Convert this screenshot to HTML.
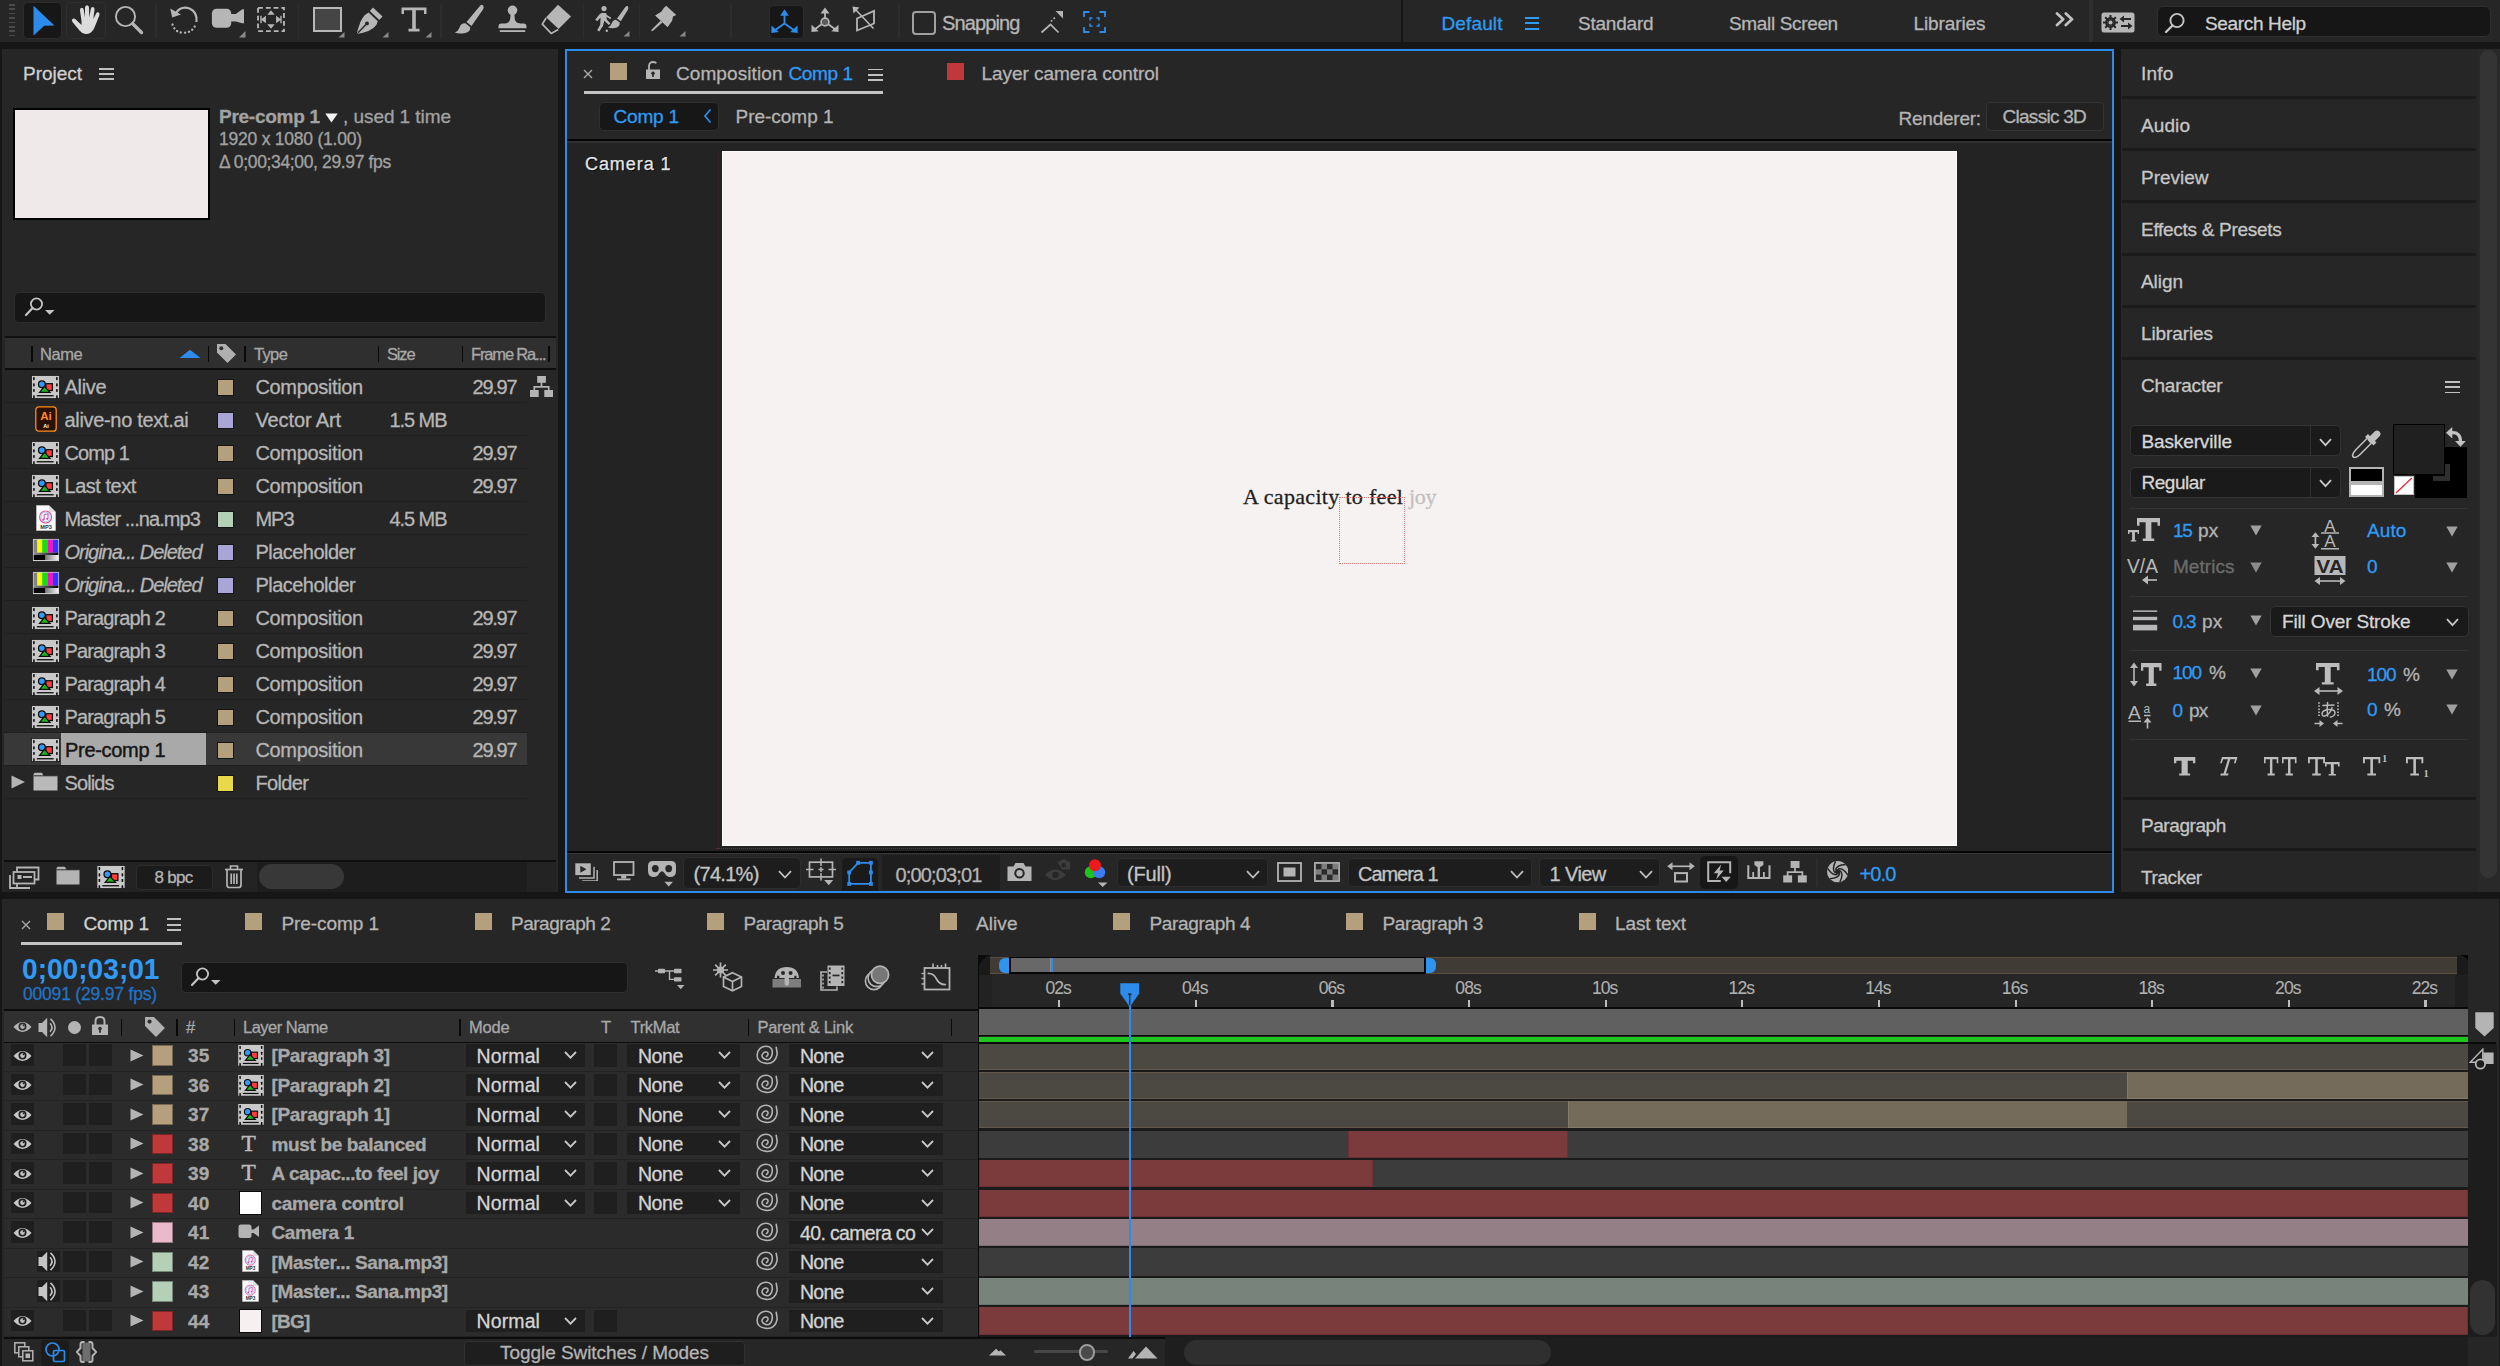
<!DOCTYPE html>
<html><head><meta charset="utf-8"><title>After Effects</title>
<style>
html,body{margin:0;padding:0;background:#161616;}
body{width:2500px;height:1366px;position:relative;overflow:hidden;font-family:"Liberation Sans",sans-serif;}
#r div,#r svg,#r span{position:absolute;box-sizing:border-box;}
#r{position:absolute;left:0;top:0;width:2500px;height:1366px;overflow:hidden;}
.t{white-space:nowrap;display:block;-webkit-text-stroke:0.3px;}
</style></head><body><div id="r">
<div style="left:0px;top:0px;width:2500px;height:42px;background:#262626;"></div>
<div style="left:2px;top:49px;width:556px;height:843px;background:#262626;"></div>
<div style="left:565px;top:49px;width:1549px;height:844px;background:#262626;border:2px solid #2d8ceb;"></div>
<div style="left:2121px;top:49px;width:357px;height:843px;background:#262626;"></div>
<div style="left:2478.4px;top:49px;width:21.6px;height:843px;background:#292929;"></div>
<div style="left:2px;top:899px;width:2496.5px;height:467px;background:#262626;"></div>
<span class="t" id="t0" style="left:23px;top:60.5px;font-size:19px;line-height:25px;color:#cfcfcf;letter-spacing:-0.022px;">Project</span>
<div style="left:99px;top:68.2px;width:14.5px;height:1.9px;background:#c0c0c0;"></div>
<div style="left:99px;top:73.3px;width:14.5px;height:1.9px;background:#c0c0c0;"></div>
<div style="left:99px;top:78.4px;width:14.5px;height:1.9px;background:#c0c0c0;"></div>
<div style="left:13px;top:108.3px;width:197px;height:112px;background:#efe9e9;border:2px solid #000;"></div>
<span class="t" id="t1" style="left:219px;top:103.5px;font-size:19px;line-height:25px;color:#a2a2a2;font-weight:700;letter-spacing:-0.262px;">Pre-comp 1</span>
<svg style="left:325px;top:112.6px;" width="13" height="10" viewBox="0 0 13 10"><path d="M0.3 0.5 L12.7 0.5 L6.5 9.5Z" fill="#f4f4f4"/></svg>
<span class="t" id="t2" style="left:343px;top:103.5px;font-size:19px;line-height:25px;color:#a2a2a2;letter-spacing:-0.062px;">, used 1 time</span>
<span class="t" id="t3" style="left:219px;top:128.3px;font-size:17.5px;line-height:23px;color:#a2a2a2;letter-spacing:-0.224px;">1920 x 1080 (1.00)</span>
<span class="t" id="t4" style="left:219px;top:151.3px;font-size:17.5px;line-height:23px;color:#a2a2a2;letter-spacing:-0.357px;">Δ 0;00;34;00, 29.97 fps</span>
<div style="left:14px;top:292px;width:532px;height:31px;background:#161616;border-radius:5px;border:1px solid #2e2e2e;"></div>
<svg style="left:24px;top:296px;" width="32" height="22" viewBox="0 0 32 22"><circle cx="12.5" cy="8" r="5.6" fill="none" stroke="#c4c4c4" stroke-width="1.8"/><path d="M8.6 12 L2 19" stroke="#c4c4c4" stroke-width="2.2" stroke-linecap="round"/><path d="M21 14 L30.5 14 L25.7 18.8Z" fill="#c4c4c4"/></svg>
<div style="left:5px;top:336px;width:551px;height:2px;background:#111;"></div>
<div style="left:5px;top:338px;width:551px;height:30px;background:#2f2f2f;"></div>
<div style="left:5px;top:368px;width:551px;height:2px;background:#0c0c0c;"></div>
<div style="left:31px;top:345.5px;width:1.5px;height:16.5px;background:#0a0a0a;"></div>
<div style="left:207.5px;top:345.5px;width:1.5px;height:16.5px;background:#0a0a0a;"></div>
<div style="left:244px;top:345.5px;width:1.5px;height:16.5px;background:#0a0a0a;"></div>
<div style="left:377.5px;top:345.5px;width:1.5px;height:16.5px;background:#0a0a0a;"></div>
<div style="left:461.5px;top:345.5px;width:1.5px;height:16.5px;background:#0a0a0a;"></div>
<div style="left:548px;top:345.5px;width:1.5px;height:16.5px;background:#0a0a0a;"></div>
<span class="t" id="t5" style="left:40px;top:343.5px;font-size:16.5px;line-height:21px;color:#a8a8a8;letter-spacing:-0.433px;">Name</span>
<span class="t" id="t6" style="left:254px;top:343.5px;font-size:16.5px;line-height:21px;color:#a8a8a8;letter-spacing:-0.652px;">Type</span>
<span class="t" id="t7" style="left:387px;top:343.5px;font-size:16.5px;line-height:21px;color:#a8a8a8;letter-spacing:-1.174px;">Size</span>
<span class="t" id="t8" style="left:471px;top:343.5px;font-size:16.5px;line-height:21px;color:#a8a8a8;letter-spacing:-1.153px;">Frame Ra...</span>
<svg style="left:179px;top:349px;" width="22" height="10" viewBox="0 0 22 10"><path d="M0.5 9 L11 0.8 L21.5 9Z" fill="#2d8ceb"/></svg>
<svg style="left:216px;top:343px;" width="22" height="22" viewBox="0 0 22 22"><path d="M1 1 L9.5 1 L20 11.5 L11.5 20 L1 9.5Z" fill="#b0b0b0"/><circle cx="5.3" cy="5.3" r="2" fill="#2f2f2f"/></svg>
<div style="left:4px;top:402px;width:522.5px;height:1px;background:#1f1f1f;"></div>
<svg style="left:31.2px;top:374.5px;" width="29" height="24" viewBox="0 0 29 24"><rect x="0.4" y="0.4" width="28.2" height="23.2" fill="#c9c9c9" stroke="#161616" stroke-width="0.8"/>
<g fill="#0e0e0e"><rect x="2.1" y="2.1" width="1.6" height="3.1" rx="0.6"/><rect x="2.1" y="8.3" width="1.6" height="3.1" rx="0.6"/><rect x="2.1" y="14" width="1.6" height="2.9" rx="0.6"/><rect x="2.1" y="20.2" width="1.6" height="3.4" rx="0.6"/>
<rect x="25.1" y="2.1" width="1.6" height="3.1" rx="0.6"/><rect x="25.1" y="8.3" width="1.6" height="3.1" rx="0.6"/><rect x="25.1" y="14" width="1.6" height="2.9" rx="0.6"/><rect x="25.1" y="20.2" width="1.6" height="3.4" rx="0.6"/>
<rect x="5.8" y="20.1" width="16.8" height="1.3"/></g>
<rect x="14.9" y="8.7" width="6.5" height="6.8" fill="#ff3b3b" stroke="#0c0c0c" stroke-width="1.25"/>
<circle cx="10.9" cy="9.3" r="3.4" fill="#3398fb" stroke="#0c0c0c" stroke-width="1.25"/>
<path d="M8.6 17.4 L13.5 11.4 L19 17.4Z" fill="#1db51d" stroke="#0c0c0c" stroke-width="1.25"/></svg>
<span class="t" id="t9" style="left:64.5px;top:374.0px;font-size:20px;line-height:26px;color:#b6b6b6;letter-spacing:-0.302px;">Alive</span>
<div style="left:216.5px;top:378.5px;width:17.5px;height:17.5px;background:#b5a07d;border:1px solid #151515;"></div>
<span class="t" id="t10" style="left:255.5px;top:374.0px;font-size:20px;line-height:26px;color:#b6b6b6;letter-spacing:-0.350px;">Composition</span>
<span class="t" id="t11" style="left:472.5px;top:374.0px;font-size:20px;line-height:26px;color:#b6b6b6;letter-spacing:-1.236px;">29.97</span>
<div style="left:4px;top:435px;width:522.5px;height:1px;background:#1f1f1f;"></div>
<svg style="left:35px;top:406px;" width="22" height="26" viewBox="0 0 22 26"><rect x="0.8" y="0.8" width="20.4" height="24.4" rx="3" fill="#2a1203" stroke="#ff8a1a" stroke-width="1.3"/>
<text x="11" y="13.5" font-family="Liberation Sans" font-weight="700" font-size="11.5" fill="#ff8a1a" text-anchor="middle">Ai</text>
<text x="11" y="22" font-family="Liberation Sans" font-weight="700" font-size="5.5" fill="#fff" text-anchor="middle">Ai</text></svg>
<span class="t" id="t12" style="left:64.5px;top:407.0px;font-size:20px;line-height:26px;color:#b6b6b6;letter-spacing:-0.321px;">alive-no text.ai</span>
<div style="left:216.5px;top:411.5px;width:17.5px;height:17.5px;background:#a9a5d6;border:1px solid #151515;"></div>
<span class="t" id="t13" style="left:255.5px;top:407.0px;font-size:20px;line-height:26px;color:#b6b6b6;letter-spacing:-0.128px;">Vector Art</span>
<span class="t" id="t14" style="left:389.5px;top:407.0px;font-size:20px;line-height:26px;color:#b6b6b6;letter-spacing:-1.065px;">1.5 MB</span>
<div style="left:4px;top:468px;width:522.5px;height:1px;background:#1f1f1f;"></div>
<svg style="left:31.2px;top:440.5px;" width="29" height="24" viewBox="0 0 29 24"><rect x="0.4" y="0.4" width="28.2" height="23.2" fill="#c9c9c9" stroke="#161616" stroke-width="0.8"/>
<g fill="#0e0e0e"><rect x="2.1" y="2.1" width="1.6" height="3.1" rx="0.6"/><rect x="2.1" y="8.3" width="1.6" height="3.1" rx="0.6"/><rect x="2.1" y="14" width="1.6" height="2.9" rx="0.6"/><rect x="2.1" y="20.2" width="1.6" height="3.4" rx="0.6"/>
<rect x="25.1" y="2.1" width="1.6" height="3.1" rx="0.6"/><rect x="25.1" y="8.3" width="1.6" height="3.1" rx="0.6"/><rect x="25.1" y="14" width="1.6" height="2.9" rx="0.6"/><rect x="25.1" y="20.2" width="1.6" height="3.4" rx="0.6"/>
<rect x="5.8" y="20.1" width="16.8" height="1.3"/></g>
<rect x="14.9" y="8.7" width="6.5" height="6.8" fill="#ff3b3b" stroke="#0c0c0c" stroke-width="1.25"/>
<circle cx="10.9" cy="9.3" r="3.4" fill="#3398fb" stroke="#0c0c0c" stroke-width="1.25"/>
<path d="M8.6 17.4 L13.5 11.4 L19 17.4Z" fill="#1db51d" stroke="#0c0c0c" stroke-width="1.25"/></svg>
<span class="t" id="t15" style="left:64.5px;top:440.0px;font-size:20px;line-height:26px;color:#b6b6b6;letter-spacing:-0.915px;">Comp 1</span>
<div style="left:216.5px;top:444.5px;width:17.5px;height:17.5px;background:#b5a07d;border:1px solid #151515;"></div>
<span class="t" id="t16" style="left:255.5px;top:440.0px;font-size:20px;line-height:26px;color:#b6b6b6;letter-spacing:-0.350px;">Composition</span>
<span class="t" id="t17" style="left:472.5px;top:440.0px;font-size:20px;line-height:26px;color:#b6b6b6;letter-spacing:-1.236px;">29.97</span>
<div style="left:4px;top:501px;width:522.5px;height:1px;background:#1f1f1f;"></div>
<svg style="left:31.2px;top:473.5px;" width="29" height="24" viewBox="0 0 29 24"><rect x="0.4" y="0.4" width="28.2" height="23.2" fill="#c9c9c9" stroke="#161616" stroke-width="0.8"/>
<g fill="#0e0e0e"><rect x="2.1" y="2.1" width="1.6" height="3.1" rx="0.6"/><rect x="2.1" y="8.3" width="1.6" height="3.1" rx="0.6"/><rect x="2.1" y="14" width="1.6" height="2.9" rx="0.6"/><rect x="2.1" y="20.2" width="1.6" height="3.4" rx="0.6"/>
<rect x="25.1" y="2.1" width="1.6" height="3.1" rx="0.6"/><rect x="25.1" y="8.3" width="1.6" height="3.1" rx="0.6"/><rect x="25.1" y="14" width="1.6" height="2.9" rx="0.6"/><rect x="25.1" y="20.2" width="1.6" height="3.4" rx="0.6"/>
<rect x="5.8" y="20.1" width="16.8" height="1.3"/></g>
<rect x="14.9" y="8.7" width="6.5" height="6.8" fill="#ff3b3b" stroke="#0c0c0c" stroke-width="1.25"/>
<circle cx="10.9" cy="9.3" r="3.4" fill="#3398fb" stroke="#0c0c0c" stroke-width="1.25"/>
<path d="M8.6 17.4 L13.5 11.4 L19 17.4Z" fill="#1db51d" stroke="#0c0c0c" stroke-width="1.25"/></svg>
<span class="t" id="t18" style="left:64.5px;top:473.0px;font-size:20px;line-height:26px;color:#b6b6b6;letter-spacing:-0.483px;">Last text</span>
<div style="left:216.5px;top:477.5px;width:17.5px;height:17.5px;background:#b5a07d;border:1px solid #151515;"></div>
<span class="t" id="t19" style="left:255.5px;top:473.0px;font-size:20px;line-height:26px;color:#b6b6b6;letter-spacing:-0.350px;">Composition</span>
<span class="t" id="t20" style="left:472.5px;top:473.0px;font-size:20px;line-height:26px;color:#b6b6b6;letter-spacing:-1.236px;">29.97</span>
<div style="left:4px;top:534px;width:522.5px;height:1px;background:#1f1f1f;"></div>
<svg style="left:36px;top:505px;" width="20" height="26" viewBox="0 0 20 26"><path d="M0.5 0.5 L13 0.5 L19.5 7 L19.5 25.5 L0.5 25.5Z" fill="#fbfbfb" stroke="#cfcfcf" stroke-width="0.6"/>
<path d="M13 0.5 L13 7 L19.5 7Z" fill="#dcdcdc"/>
<circle cx="9.6" cy="12" r="6" fill="#fff" stroke="#e0569b" stroke-width="1.1"/>
<circle cx="9.6" cy="12" r="4.6" fill="none" stroke="#6fb6ee" stroke-width="0.7"/>
<path d="M8.2 14.5 L8.2 9.6 L12 8.8 L12 13.6" fill="none" stroke="#c94bb0" stroke-width="1"/>
<circle cx="7.4" cy="14.6" r="1.1" fill="#c94bb0"/><circle cx="11.2" cy="13.8" r="1.1" fill="#c94bb0"/>
<text x="10" y="23.6" font-family="Liberation Sans" font-size="5.6" font-weight="700" fill="#333" text-anchor="middle">MP3</text></svg>
<span class="t" id="t21" style="left:64.5px;top:506.0px;font-size:20px;line-height:26px;color:#b6b6b6;letter-spacing:-0.907px;">Master ...na.mp3</span>
<div style="left:216.5px;top:510.5px;width:17.5px;height:17.5px;background:#b4d0b7;border:1px solid #151515;"></div>
<span class="t" id="t22" style="left:255.5px;top:506.0px;font-size:20px;line-height:26px;color:#b6b6b6;letter-spacing:-1.050px;">MP3</span>
<span class="t" id="t23" style="left:389.5px;top:506.0px;font-size:20px;line-height:26px;color:#b6b6b6;letter-spacing:-1.065px;">4.5 MB</span>
<div style="left:4px;top:567px;width:522.5px;height:1px;background:#1f1f1f;"></div>
<svg style="left:31.8px;top:538.4px;" width="28" height="24" viewBox="0 0 28 24"><defs><linearGradient id="phg1" x1="0" x2="1" y1="0" y2="0"><stop offset="0" stop-color="#8a8a8a"/><stop offset="1" stop-color="#050505"/></linearGradient><linearGradient id="phg2" x1="0" x2="1" y1="0" y2="0"><stop offset="0" stop-color="#7a7a7a"/><stop offset="1" stop-color="#f4f4f4"/></linearGradient></defs>
<rect x="0.4" y="0.4" width="27.2" height="23.2" fill="#cdcdcd" stroke="#1a1a1a" stroke-width="0.8"/>
<rect x="1.7" y="1.7" width="3.6" height="13" fill="#828282"/><rect x="5.3" y="1.7" width="5" height="13" fill="#f8f800"/>
<rect x="10.3" y="1.7" width="5.2" height="13" fill="#10e010"/><rect x="15.5" y="1.7" width="5.4" height="13" fill="#f410c8"/><rect x="20.9" y="1.7" width="5.4" height="13" fill="#3434ff"/>
<rect x="1.7" y="14.7" width="24.6" height="2.3" fill="url(#phg1)"/>
<rect x="1.7" y="17" width="11.8" height="5" fill="#040404"/><rect x="13.5" y="17" width="12.8" height="5" fill="url(#phg2)"/></svg>
<span class="t" id="t24" style="left:64.5px;top:539.0px;font-size:20px;line-height:26px;color:#b6b6b6;font-style:italic;letter-spacing:-1.037px;">Origina... Deleted</span>
<div style="left:216.5px;top:543.5px;width:17.5px;height:17.5px;background:#a9a5d6;border:1px solid #151515;"></div>
<span class="t" id="t25" style="left:255.5px;top:539.0px;font-size:20px;line-height:26px;color:#b6b6b6;letter-spacing:-0.536px;">Placeholder</span>
<div style="left:4px;top:600px;width:522.5px;height:1px;background:#1f1f1f;"></div>
<svg style="left:31.8px;top:571.4px;" width="28" height="24" viewBox="0 0 28 24"><defs><linearGradient id="phg1" x1="0" x2="1" y1="0" y2="0"><stop offset="0" stop-color="#8a8a8a"/><stop offset="1" stop-color="#050505"/></linearGradient><linearGradient id="phg2" x1="0" x2="1" y1="0" y2="0"><stop offset="0" stop-color="#7a7a7a"/><stop offset="1" stop-color="#f4f4f4"/></linearGradient></defs>
<rect x="0.4" y="0.4" width="27.2" height="23.2" fill="#cdcdcd" stroke="#1a1a1a" stroke-width="0.8"/>
<rect x="1.7" y="1.7" width="3.6" height="13" fill="#828282"/><rect x="5.3" y="1.7" width="5" height="13" fill="#f8f800"/>
<rect x="10.3" y="1.7" width="5.2" height="13" fill="#10e010"/><rect x="15.5" y="1.7" width="5.4" height="13" fill="#f410c8"/><rect x="20.9" y="1.7" width="5.4" height="13" fill="#3434ff"/>
<rect x="1.7" y="14.7" width="24.6" height="2.3" fill="url(#phg1)"/>
<rect x="1.7" y="17" width="11.8" height="5" fill="#040404"/><rect x="13.5" y="17" width="12.8" height="5" fill="url(#phg2)"/></svg>
<span class="t" id="t26" style="left:64.5px;top:572.0px;font-size:20px;line-height:26px;color:#b6b6b6;font-style:italic;letter-spacing:-1.037px;">Origina... Deleted</span>
<div style="left:216.5px;top:576.5px;width:17.5px;height:17.5px;background:#a9a5d6;border:1px solid #151515;"></div>
<span class="t" id="t27" style="left:255.5px;top:572.0px;font-size:20px;line-height:26px;color:#b6b6b6;letter-spacing:-0.536px;">Placeholder</span>
<div style="left:4px;top:633px;width:522.5px;height:1px;background:#1f1f1f;"></div>
<svg style="left:31.2px;top:605.5px;" width="29" height="24" viewBox="0 0 29 24"><rect x="0.4" y="0.4" width="28.2" height="23.2" fill="#c9c9c9" stroke="#161616" stroke-width="0.8"/>
<g fill="#0e0e0e"><rect x="2.1" y="2.1" width="1.6" height="3.1" rx="0.6"/><rect x="2.1" y="8.3" width="1.6" height="3.1" rx="0.6"/><rect x="2.1" y="14" width="1.6" height="2.9" rx="0.6"/><rect x="2.1" y="20.2" width="1.6" height="3.4" rx="0.6"/>
<rect x="25.1" y="2.1" width="1.6" height="3.1" rx="0.6"/><rect x="25.1" y="8.3" width="1.6" height="3.1" rx="0.6"/><rect x="25.1" y="14" width="1.6" height="2.9" rx="0.6"/><rect x="25.1" y="20.2" width="1.6" height="3.4" rx="0.6"/>
<rect x="5.8" y="20.1" width="16.8" height="1.3"/></g>
<rect x="14.9" y="8.7" width="6.5" height="6.8" fill="#ff3b3b" stroke="#0c0c0c" stroke-width="1.25"/>
<circle cx="10.9" cy="9.3" r="3.4" fill="#3398fb" stroke="#0c0c0c" stroke-width="1.25"/>
<path d="M8.6 17.4 L13.5 11.4 L19 17.4Z" fill="#1db51d" stroke="#0c0c0c" stroke-width="1.25"/></svg>
<span class="t" id="t28" style="left:64.5px;top:605.0px;font-size:20px;line-height:26px;color:#b6b6b6;letter-spacing:-0.865px;">Paragraph 2</span>
<div style="left:216.5px;top:609.5px;width:17.5px;height:17.5px;background:#b5a07d;border:1px solid #151515;"></div>
<span class="t" id="t29" style="left:255.5px;top:605.0px;font-size:20px;line-height:26px;color:#b6b6b6;letter-spacing:-0.350px;">Composition</span>
<span class="t" id="t30" style="left:472.5px;top:605.0px;font-size:20px;line-height:26px;color:#b6b6b6;letter-spacing:-1.236px;">29.97</span>
<div style="left:4px;top:666px;width:522.5px;height:1px;background:#1f1f1f;"></div>
<svg style="left:31.2px;top:638.5px;" width="29" height="24" viewBox="0 0 29 24"><rect x="0.4" y="0.4" width="28.2" height="23.2" fill="#c9c9c9" stroke="#161616" stroke-width="0.8"/>
<g fill="#0e0e0e"><rect x="2.1" y="2.1" width="1.6" height="3.1" rx="0.6"/><rect x="2.1" y="8.3" width="1.6" height="3.1" rx="0.6"/><rect x="2.1" y="14" width="1.6" height="2.9" rx="0.6"/><rect x="2.1" y="20.2" width="1.6" height="3.4" rx="0.6"/>
<rect x="25.1" y="2.1" width="1.6" height="3.1" rx="0.6"/><rect x="25.1" y="8.3" width="1.6" height="3.1" rx="0.6"/><rect x="25.1" y="14" width="1.6" height="2.9" rx="0.6"/><rect x="25.1" y="20.2" width="1.6" height="3.4" rx="0.6"/>
<rect x="5.8" y="20.1" width="16.8" height="1.3"/></g>
<rect x="14.9" y="8.7" width="6.5" height="6.8" fill="#ff3b3b" stroke="#0c0c0c" stroke-width="1.25"/>
<circle cx="10.9" cy="9.3" r="3.4" fill="#3398fb" stroke="#0c0c0c" stroke-width="1.25"/>
<path d="M8.6 17.4 L13.5 11.4 L19 17.4Z" fill="#1db51d" stroke="#0c0c0c" stroke-width="1.25"/></svg>
<span class="t" id="t31" style="left:64.5px;top:638.0px;font-size:20px;line-height:26px;color:#b6b6b6;letter-spacing:-0.865px;">Paragraph 3</span>
<div style="left:216.5px;top:642.5px;width:17.5px;height:17.5px;background:#b5a07d;border:1px solid #151515;"></div>
<span class="t" id="t32" style="left:255.5px;top:638.0px;font-size:20px;line-height:26px;color:#b6b6b6;letter-spacing:-0.350px;">Composition</span>
<span class="t" id="t33" style="left:472.5px;top:638.0px;font-size:20px;line-height:26px;color:#b6b6b6;letter-spacing:-1.236px;">29.97</span>
<div style="left:4px;top:699px;width:522.5px;height:1px;background:#1f1f1f;"></div>
<svg style="left:31.2px;top:671.5px;" width="29" height="24" viewBox="0 0 29 24"><rect x="0.4" y="0.4" width="28.2" height="23.2" fill="#c9c9c9" stroke="#161616" stroke-width="0.8"/>
<g fill="#0e0e0e"><rect x="2.1" y="2.1" width="1.6" height="3.1" rx="0.6"/><rect x="2.1" y="8.3" width="1.6" height="3.1" rx="0.6"/><rect x="2.1" y="14" width="1.6" height="2.9" rx="0.6"/><rect x="2.1" y="20.2" width="1.6" height="3.4" rx="0.6"/>
<rect x="25.1" y="2.1" width="1.6" height="3.1" rx="0.6"/><rect x="25.1" y="8.3" width="1.6" height="3.1" rx="0.6"/><rect x="25.1" y="14" width="1.6" height="2.9" rx="0.6"/><rect x="25.1" y="20.2" width="1.6" height="3.4" rx="0.6"/>
<rect x="5.8" y="20.1" width="16.8" height="1.3"/></g>
<rect x="14.9" y="8.7" width="6.5" height="6.8" fill="#ff3b3b" stroke="#0c0c0c" stroke-width="1.25"/>
<circle cx="10.9" cy="9.3" r="3.4" fill="#3398fb" stroke="#0c0c0c" stroke-width="1.25"/>
<path d="M8.6 17.4 L13.5 11.4 L19 17.4Z" fill="#1db51d" stroke="#0c0c0c" stroke-width="1.25"/></svg>
<span class="t" id="t34" style="left:64.5px;top:671.0px;font-size:20px;line-height:26px;color:#b6b6b6;letter-spacing:-0.865px;">Paragraph 4</span>
<div style="left:216.5px;top:675.5px;width:17.5px;height:17.5px;background:#b5a07d;border:1px solid #151515;"></div>
<span class="t" id="t35" style="left:255.5px;top:671.0px;font-size:20px;line-height:26px;color:#b6b6b6;letter-spacing:-0.350px;">Composition</span>
<span class="t" id="t36" style="left:472.5px;top:671.0px;font-size:20px;line-height:26px;color:#b6b6b6;letter-spacing:-1.236px;">29.97</span>
<div style="left:4px;top:732px;width:522.5px;height:1px;background:#1f1f1f;"></div>
<svg style="left:31.2px;top:704.5px;" width="29" height="24" viewBox="0 0 29 24"><rect x="0.4" y="0.4" width="28.2" height="23.2" fill="#c9c9c9" stroke="#161616" stroke-width="0.8"/>
<g fill="#0e0e0e"><rect x="2.1" y="2.1" width="1.6" height="3.1" rx="0.6"/><rect x="2.1" y="8.3" width="1.6" height="3.1" rx="0.6"/><rect x="2.1" y="14" width="1.6" height="2.9" rx="0.6"/><rect x="2.1" y="20.2" width="1.6" height="3.4" rx="0.6"/>
<rect x="25.1" y="2.1" width="1.6" height="3.1" rx="0.6"/><rect x="25.1" y="8.3" width="1.6" height="3.1" rx="0.6"/><rect x="25.1" y="14" width="1.6" height="2.9" rx="0.6"/><rect x="25.1" y="20.2" width="1.6" height="3.4" rx="0.6"/>
<rect x="5.8" y="20.1" width="16.8" height="1.3"/></g>
<rect x="14.9" y="8.7" width="6.5" height="6.8" fill="#ff3b3b" stroke="#0c0c0c" stroke-width="1.25"/>
<circle cx="10.9" cy="9.3" r="3.4" fill="#3398fb" stroke="#0c0c0c" stroke-width="1.25"/>
<path d="M8.6 17.4 L13.5 11.4 L19 17.4Z" fill="#1db51d" stroke="#0c0c0c" stroke-width="1.25"/></svg>
<span class="t" id="t37" style="left:64.5px;top:704.0px;font-size:20px;line-height:26px;color:#b6b6b6;letter-spacing:-0.865px;">Paragraph 5</span>
<div style="left:216.5px;top:708.5px;width:17.5px;height:17.5px;background:#b5a07d;border:1px solid #151515;"></div>
<span class="t" id="t38" style="left:255.5px;top:704.0px;font-size:20px;line-height:26px;color:#b6b6b6;letter-spacing:-0.350px;">Composition</span>
<span class="t" id="t39" style="left:472.5px;top:704.0px;font-size:20px;line-height:26px;color:#b6b6b6;letter-spacing:-1.236px;">29.97</span>
<div style="left:4px;top:733px;width:522.5px;height:32px;background:#383838;"></div>
<div style="left:61px;top:733px;width:144.5px;height:32px;background:#a9a9a9;"></div>
<div style="left:4px;top:765px;width:522.5px;height:1px;background:#1f1f1f;"></div>
<svg style="left:31.2px;top:737.5px;" width="29" height="24" viewBox="0 0 29 24"><rect x="0.4" y="0.4" width="28.2" height="23.2" fill="#c9c9c9" stroke="#161616" stroke-width="0.8"/>
<g fill="#0e0e0e"><rect x="2.1" y="2.1" width="1.6" height="3.1" rx="0.6"/><rect x="2.1" y="8.3" width="1.6" height="3.1" rx="0.6"/><rect x="2.1" y="14" width="1.6" height="2.9" rx="0.6"/><rect x="2.1" y="20.2" width="1.6" height="3.4" rx="0.6"/>
<rect x="25.1" y="2.1" width="1.6" height="3.1" rx="0.6"/><rect x="25.1" y="8.3" width="1.6" height="3.1" rx="0.6"/><rect x="25.1" y="14" width="1.6" height="2.9" rx="0.6"/><rect x="25.1" y="20.2" width="1.6" height="3.4" rx="0.6"/>
<rect x="5.8" y="20.1" width="16.8" height="1.3"/></g>
<rect x="14.9" y="8.7" width="6.5" height="6.8" fill="#ff3b3b" stroke="#0c0c0c" stroke-width="1.25"/>
<circle cx="10.9" cy="9.3" r="3.4" fill="#3398fb" stroke="#0c0c0c" stroke-width="1.25"/>
<path d="M8.6 17.4 L13.5 11.4 L19 17.4Z" fill="#1db51d" stroke="#0c0c0c" stroke-width="1.25"/></svg>
<span class="t" id="t40" style="left:65px;top:737.0px;font-size:20px;line-height:26px;color:#161616;letter-spacing:-0.303px;-webkit-text-stroke:0.45px #161616;">Pre-comp 1</span>
<div style="left:216.5px;top:741.5px;width:17.5px;height:17.5px;background:#b5a07d;border:1px solid #151515;"></div>
<span class="t" id="t41" style="left:255.5px;top:737.0px;font-size:20px;line-height:26px;color:#b6b6b6;letter-spacing:-0.350px;">Composition</span>
<span class="t" id="t42" style="left:472.5px;top:737.0px;font-size:20px;line-height:26px;color:#b6b6b6;letter-spacing:-1.236px;">29.97</span>
<div style="left:4px;top:798px;width:522.5px;height:1px;background:#1f1f1f;"></div>
<svg style="left:32.5px;top:772px;" width="25" height="19" viewBox="0 0 25 19"><path d="M0.5 2.2 L0.5 18.5 L24.5 18.5 L24.5 3.8 L10.5 3.8 L9 0.8 L1.5 0.8Z" fill="#b9b9b9"/><path d="M0.5 3.8 L24.5 3.8" stroke="#262626" stroke-width="0.9"/></svg>
<svg style="left:11px;top:775px;" width="15" height="14" viewBox="0 0 15 14"><path d="M0.5 0.5 L14 7 L0.5 13.5Z" fill="#b4b4b4"/></svg>
<span class="t" id="t43" style="left:64.5px;top:770.0px;font-size:20px;line-height:26px;color:#b6b6b6;letter-spacing:-0.906px;">Solids</span>
<div style="left:216.5px;top:774.5px;width:17.5px;height:17.5px;background:#e8d84a;border:1px solid #151515;"></div>
<span class="t" id="t44" style="left:255.5px;top:770.0px;font-size:20px;line-height:26px;color:#b6b6b6;letter-spacing:-0.673px;">Folder</span>
<svg style="left:529.5px;top:375.5px;" width="23" height="21" viewBox="0 0 23 21"><g fill="#b4b4b4"><rect x="7.2" y="0" width="8.7" height="6.8"/><rect x="0" y="14" width="8.7" height="7"/><rect x="14.3" y="14" width="8.7" height="7"/></g><path d="M11.5 6 L11.5 11 M4.3 15 L4.3 10.8 L18.7 10.8 L18.7 15" fill="none" stroke="#b4b4b4" stroke-width="1.7"/></svg>
<div style="left:4px;top:860px;width:552px;height:2px;background:#0e0e0e;"></div>
<div style="left:4px;top:862px;width:552px;height:30px;background:#232323;"></div>
<div style="left:257px;top:862px;width:269.5px;height:30px;background:#1d1d1d;"></div>
<div style="left:259px;top:864px;width:85px;height:25px;background:#383838;border-radius:12.5px;"></div>
<div style="left:135.5px;top:865px;width:77px;height:24.5px;background:#1b1b1b;border-radius:4px;border:1px solid #2c2c2c;"></div>
<span class="t" id="t45" style="left:154.5px;top:866.5px;font-size:17px;line-height:22px;color:#b4b4b4;letter-spacing:-0.688px;">8 bpc</span>
<svg style="left:9px;top:866px;" width="31" height="24" viewBox="0 0 31 24"><g fill="none" stroke="#b4b4b4" stroke-width="1.8"><path d="M8 6 L8 1.5 L29.5 1.5 L29.5 13.5 L26 13.5"/><rect x="4.5" y="6" width="21" height="11.5" fill="#232323"/><path d="M1 9 L1 22 L21 22"/><path d="M8 21.5 L8 17.5"/></g><rect x="8.5" y="9" width="4" height="4" fill="#b4b4b4"/><rect x="14" y="10" width="9" height="2" fill="#b4b4b4"/></svg>
<svg style="left:55.5px;top:866px;" width="24" height="19" viewBox="0 0 24 19"><path d="M0.5 2.2 L0.5 18.5 L23.5 18.5 L23.5 3.8 L10.5 3.8 L9 0.8 L1.5 0.8Z" fill="#b4b4b4"/><path d="M0.5 3.8 L23.5 3.8" stroke="#232323" stroke-width="0.9"/></svg>
<svg style="left:96px;top:865px;" width="30" height="24" viewBox="0 0 29 24"><rect x="0.4" y="0.4" width="28.2" height="23.2" fill="#c9c9c9" stroke="#161616" stroke-width="0.8"/>
<g fill="#0e0e0e"><rect x="2.1" y="2.1" width="1.6" height="3.1" rx="0.6"/><rect x="2.1" y="8.3" width="1.6" height="3.1" rx="0.6"/><rect x="2.1" y="14" width="1.6" height="2.9" rx="0.6"/><rect x="2.1" y="20.2" width="1.6" height="3.4" rx="0.6"/>
<rect x="25.1" y="2.1" width="1.6" height="3.1" rx="0.6"/><rect x="25.1" y="8.3" width="1.6" height="3.1" rx="0.6"/><rect x="25.1" y="14" width="1.6" height="2.9" rx="0.6"/><rect x="25.1" y="20.2" width="1.6" height="3.4" rx="0.6"/>
<rect x="5.8" y="20.1" width="16.8" height="1.3"/></g>
<rect x="14.9" y="8.7" width="6.5" height="6.8" fill="#ff3b3b" stroke="#0c0c0c" stroke-width="1.25"/>
<circle cx="10.9" cy="9.3" r="3.4" fill="#3398fb" stroke="#0c0c0c" stroke-width="1.25"/>
<path d="M8.6 17.4 L13.5 11.4 L19 17.4Z" fill="#1db51d" stroke="#0c0c0c" stroke-width="1.25"/></svg>
<svg style="left:224px;top:865px;" width="20" height="24" viewBox="0 0 20 24"><g fill="none" stroke="#b4b4b4" stroke-width="1.7"><path d="M1 4.5 L19 4.5"/><path d="M6.5 4 L6.5 1 L13.5 1 L13.5 4"/><path d="M3 5 L3 20 Q3 22.5 5.5 22.5 L14.5 22.5 Q17 22.5 17 20 L17 5"/><path d="M7.2 8.5 L7.2 19 M10 8.5 L10 19 M12.8 8.5 L12.8 19"/></g></svg>
<svg style="left:583px;top:68.5px;" width="10" height="10" viewBox="0 0 10 10"><path d="M1 1 L9 9 M9 1 L1 9" stroke="#a8a8a8" stroke-width="1.4"/></svg>
<div style="left:610px;top:63px;width:17px;height:17px;background:#b5a07d;"></div>
<svg style="left:645px;top:60px;" width="16" height="20" viewBox="0 0 16 20"><path d="M4 10 L4 6.2 Q4 2 8.2 2 Q10.6 2 11.2 3.4" fill="none" stroke="#b4b4b4" stroke-width="1.8"/><rect x="1" y="9.5" width="14" height="9.5" fill="#b4b4b4"/><circle cx="8" cy="13.2" r="1.7" fill="#262626"/><rect x="7.2" y="13.5" width="1.6" height="3.5" fill="#262626"/></svg>
<span class="t" id="t46" style="left:676px;top:61.0px;font-size:19px;line-height:25px;color:#b4b4b4;letter-spacing:0.085px;">Composition</span>
<span class="t" id="t47" style="left:788.5px;top:61.0px;font-size:19px;line-height:25px;color:#2f9bf5;letter-spacing:-0.369px;">Comp 1</span>
<div style="left:868px;top:68.6px;width:15px;height:1.9px;background:#c0c0c0;"></div>
<div style="left:868px;top:73.69999999999999px;width:15px;height:1.9px;background:#c0c0c0;"></div>
<div style="left:868px;top:78.8px;width:15px;height:1.9px;background:#c0c0c0;"></div>
<div style="left:584px;top:91px;width:299px;height:3px;background:#c4c4c4;"></div>
<div style="left:946.5px;top:63px;width:17px;height:17px;background:#c0383a;"></div>
<span class="t" id="t48" style="left:981.5px;top:61.0px;font-size:19px;line-height:25px;color:#b4b4b4;letter-spacing:-0.050px;">Layer camera control</span>
<div style="left:598.5px;top:102px;width:120px;height:29px;background:#171717;border-radius:5px;border:1px solid #303030;"></div>
<span class="t" id="t49" style="left:613.5px;top:104.0px;font-size:19px;line-height:25px;color:#2f9bf5;letter-spacing:-0.188px;">Comp 1</span>
<svg style="left:703px;top:108px;" width="9" height="16" viewBox="0 0 9 16"><path d="M7.5 1.5 L2 8 L7.5 14.5" fill="none" stroke="#2d8ceb" stroke-width="1.8"/></svg>
<span class="t" id="t50" style="left:735.5px;top:104.0px;font-size:19px;line-height:25px;color:#b4b4b4;letter-spacing:-0.021px;">Pre-comp 1</span>
<span class="t" id="t51" style="left:1898.5px;top:105.5px;font-size:19px;line-height:25px;color:#b4b4b4;letter-spacing:-0.235px;">Renderer:</span>
<div style="left:1986px;top:102px;width:118px;height:29px;background:#222222;border-radius:4px;border:1px solid #333;"></div>
<span class="t" id="t52" style="left:2002.5px;top:104.0px;font-size:19px;line-height:25px;color:#b4b4b4;letter-spacing:-0.717px;">Classic 3D</span>
<div style="left:567px;top:139.4px;width:1545px;height:1.7px;background:#050505;"></div>
<div style="left:567px;top:141px;width:1545px;height:710.4px;background:#232323;"></div>
<div style="left:567px;top:141px;width:1545px;height:2px;background:#313131;"></div>
<span class="t" id="t53" style="left:585px;top:152.8px;font-size:18px;line-height:23px;color:#e6e6e6;letter-spacing:0.929px;text-shadow:1px 1px 0 #000;-webkit-text-stroke:0.25px;">Camera 1</span>
<div style="left:722.4px;top:151px;width:1234.9px;height:694.9px;background:#f6f2f2;border:1.4px solid #fdfcfc;"></div>
<div style="left:716px;top:848px;width:1238px;height:1.5px;background:transparent;border-top:1.5px dotted #6e2540;"></div>
<div style="left:717.8px;top:152px;width:1.3px;height:697px;background:transparent;border-left:1.3px dotted #3d2530;"></div>
<span class="t" id="t54" style="left:1243px;top:482.0px;font-size:22px;line-height:29px;color:#1e1e1e;font-family:'Liberation Serif', serif;letter-spacing:0.312px;">A capacity to feel</span>
<span class="t" id="t55" style="left:1409px;top:482.0px;font-size:22px;line-height:29px;color:#c2bfbf;font-family:'Liberation Serif', serif;letter-spacing:-0.250px;">joy</span>
<div style="left:1339px;top:497px;width:66px;height:66.5px;background:transparent;border:1.5px dotted #dc7476;"></div>
<div style="left:567px;top:851px;width:1545px;height:1.6px;background:#050505;"></div>
<div style="left:567px;top:852.6px;width:1545px;height:38.4px;background:#262626;"></div>
<div style="left:567px;top:852.8px;width:1545px;height:1.2px;background:#363636;"></div>
<svg style="left:575px;top:862.5px;" width="23" height="18.5" viewBox="0 0 23 18.5"><rect x="0.3" y="0.3" width="15.5" height="11.8" fill="#b4b4b4"/><path d="M5.3 2.8 L11.5 6.2 L5.3 9.7Z" fill="#262626"/><path d="M19 3.8 L19 15 L4 15 M22.2 7 L22.2 18 L7.2 18" fill="none" stroke="#b4b4b4" stroke-width="1.5"/></svg>
<svg style="left:613px;top:861.2px;" width="21.5" height="20" viewBox="0 0 21.5 20"><rect x="1" y="1" width="19.5" height="13" fill="none" stroke="#b4b4b4" stroke-width="1.8"/><rect x="8.2" y="14.5" width="5" height="3" fill="#b4b4b4"/><rect x="4" y="17.5" width="13.5" height="1.8" fill="#b4b4b4"/></svg>
<svg style="left:647px;top:860.4px;" width="30" height="28" viewBox="0 0 30 28"><path d="M1 6 Q1 1 6 1 L24 1 Q29 1 29 6 L29 11 Q29 17 23 17 Q19.5 17 17.5 13 Q15 9.5 12.5 13 Q10.5 17 7 17 Q1 17 1 11Z" fill="#b4b4b4"/><ellipse cx="8.3" cy="8.6" rx="3.4" ry="3.6" fill="#262626"/><ellipse cx="21.7" cy="8.6" rx="3.4" ry="3.6" fill="#262626"/><path d="M0.5 4.5 L0.5 9.5 M29.5 4.5 L29.5 9.5" stroke="#262626" stroke-width="1"/><path d="M17.5 21.8 L26 21.8 L21.7 26.5Z" fill="#b4b4b4"/></svg>
<div style="left:682.5px;top:857.3px;width:118.5px;height:31.3px;background:#1d1d1d;border-radius:5px;border:1px solid #2d2d2d;"></div>
<span class="t" id="t56" style="left:693.5px;top:861.0px;font-size:20px;line-height:26px;color:#c4c4c4;letter-spacing:-0.697px;">(74.1%)</span>
<svg style="left:778px;top:870px;" width="14" height="9" viewBox="0 0 14 9"><path d="M1 1.2 L7.0 7.5 L13 1.2" fill="none" stroke="#c0c0c0" stroke-width="1.8"/></svg>
<svg style="left:805px;top:857px;" width="32" height="30" viewBox="0 0 32 30"><rect x="4.5" y="5.2" width="23" height="14.7" fill="none" stroke="#b4b4b4" stroke-width="1.7"/><path d="M16 1.5 L16 9 M16 16 L16 23.5 M1 12.5 L8.5 12.5 M23.5 12.5 L31 12.5 M13.5 12.5 L18.5 12.5 M16 10 L16 15" stroke="#b4b4b4" stroke-width="1.5"/><path d="M19.2 23 L28.2 23 L23.7 28.2Z" fill="#b4b4b4"/></svg>
<div style="left:842px;top:857.5px;width:35.5px;height:33.5px;background:#1a1a1a;border-radius:5px 5px 0 0;"></div>
<svg style="left:846px;top:860px;" width="28" height="27" viewBox="0 0 28 27"><path d="M3.2 23.9 L3.2 12.4 L12.1 2.8 L24.9 2.8 L24.9 23.9Z" fill="none" stroke="#2d8ceb" stroke-width="1.8"/><g fill="#2d8ceb"><rect x="1.3" y="22" width="3.8" height="3.8"/><rect x="1.3" y="10.5" width="3.8" height="3.8"/><rect x="10.2" y="0.9" width="3.8" height="3.8"/><rect x="23" y="0.9" width="3.8" height="3.8"/><rect x="23" y="10.5" width="3.8" height="3.8"/><rect x="23" y="22" width="3.8" height="3.8"/></g></svg>
<div style="left:881.5px;top:855px;width:118.5px;height:34.5px;background:#1e1e1e;"></div>
<span class="t" id="t57" style="left:895.5px;top:861.5px;font-size:20px;line-height:26px;color:#b4b4b4;letter-spacing:-0.845px;">0;00;03;01</span>
<svg style="left:1007px;top:862px;" width="25" height="20" viewBox="0 0 25 20"><path d="M0.5 4.5 L6.5 4.5 L8.5 1 L16.5 1 L18.5 4.5 L24.5 4.5 L24.5 19 L0.5 19Z" fill="#b4b4b4"/><circle cx="12.5" cy="11.3" r="5.2" fill="#262626"/><circle cx="12.5" cy="11.3" r="3.2" fill="#b4b4b4"/></svg>
<svg style="left:1044px;top:858px;" width="28" height="26" viewBox="0 0 28 26"><path d="M1 17 Q11 6 22 17 Q11 27 1 17Z" fill="#3c3c3c"/><circle cx="11.5" cy="17" r="3.3" fill="#262626"/><path d="M13 3.5 L16 3.5 L17 1.5 L22 1.5 L23 3.5 L26 3.5 L26 11.5 L18 11.5" fill="#3c3c3c"/><circle cx="19.7" cy="7.2" r="2.2" fill="#262626"/></svg>
<svg style="left:1084px;top:859px;" width="26" height="30" viewBox="0 0 26 30"><circle cx="6.8" cy="13.2" r="6" fill="#1fc21f"/><circle cx="15.2" cy="13.2" r="6" fill="#3b7df0"/><circle cx="11" cy="6.3" r="6" fill="#f01818"/><path d="M14 23.5 L23.5 23.5 L18.7 28Z" fill="#b4b4b4"/></svg>
<div style="left:1117px;top:857.5px;width:151px;height:29.5px;background:#1d1d1d;border-radius:5px;border:1px solid #2d2d2d;"></div>
<span class="t" id="t58" style="left:1127px;top:861.0px;font-size:20px;line-height:26px;color:#c4c4c4;letter-spacing:-0.190px;">(Full)</span>
<svg style="left:1246px;top:870px;" width="14" height="9" viewBox="0 0 14 9"><path d="M1 1.2 L7.0 7.5 L13 1.2" fill="none" stroke="#c0c0c0" stroke-width="1.8"/></svg>
<svg style="left:1276.5px;top:862px;" width="25" height="20" viewBox="0 0 25 20"><rect x="1" y="1" width="23" height="18" fill="none" stroke="#b4b4b4" stroke-width="1.8"/><rect x="6.5" y="5.5" width="12" height="9" fill="#b4b4b4"/></svg>
<svg style="left:1314px;top:862px;" width="26" height="20" viewBox="0 0 26 20"><rect x="0.8" y="0.8" width="24.4" height="18.4" fill="#7d7d7d" stroke="#b4b4b4" stroke-width="1.4"/><g fill="#2a2a2a"><rect x="2" y="2" width="5.5" height="5.3"/><rect x="13" y="2" width="5.5" height="5.3"/><rect x="7.5" y="7.3" width="5.5" height="5.3"/><rect x="18.5" y="7.3" width="5.5" height="5.3"/><rect x="2" y="12.6" width="5.5" height="5.4"/><rect x="13" y="12.6" width="5.5" height="5.4"/></g></svg>
<div style="left:1348px;top:857.5px;width:183.5px;height:29.5px;background:#1d1d1d;border-radius:5px;border:1px solid #2d2d2d;"></div>
<span class="t" id="t59" style="left:1358px;top:861.0px;font-size:20px;line-height:26px;color:#c4c4c4;letter-spacing:-1.042px;">Camera 1</span>
<svg style="left:1510px;top:870px;" width="14" height="9" viewBox="0 0 14 9"><path d="M1 1.2 L7.0 7.5 L13 1.2" fill="none" stroke="#c0c0c0" stroke-width="1.8"/></svg>
<div style="left:1539px;top:857.5px;width:121px;height:29.5px;background:#1d1d1d;border-radius:5px;border:1px solid #2d2d2d;"></div>
<span class="t" id="t60" style="left:1549.5px;top:861.0px;font-size:20px;line-height:26px;color:#c4c4c4;letter-spacing:-0.577px;">1 View</span>
<svg style="left:1638.5px;top:870px;" width="14" height="9" viewBox="0 0 14 9"><path d="M1 1.2 L7.0 7.5 L13 1.2" fill="none" stroke="#c0c0c0" stroke-width="1.8"/></svg>
<svg style="left:1667px;top:861.5px;" width="29" height="22" viewBox="0 0 29 22"><path d="M4 4.3 L24 4.3" stroke="#b4b4b4" stroke-width="1.7"/><path d="M5.5 0.3 L0.2 4.3 L5.5 8.3Z M22.5 0.3 L27.8 4.3 L22.5 8.3Z" fill="#b4b4b4"/><rect x="8" y="11.1" width="12" height="8.4" fill="none" stroke="#b4b4b4" stroke-width="2"/></svg>
<div style="left:1700px;top:856px;width:38px;height:33px;background:#171717;border-radius:5px;"></div>
<svg style="left:1706px;top:860px;" width="27" height="24" viewBox="0 0 27 24"><path d="M24.2 13.2 L24.2 2.2 L2.2 2.2 L2.2 21 L14.8 21" fill="none" stroke="#b4b4b4" stroke-width="2"/><path d="M15.2 4.5 L7.8 13.3 L12 13.3 L10.2 19.6 L17.8 10.6 L13.6 10.6Z" fill="#b4b4b4"/><path d="M15.6 16.8 L24.8 16.8 L20.2 22Z" fill="#b4b4b4"/></svg>
<svg style="left:1746.5px;top:860.5px;" width="24" height="19" viewBox="0 0 24 19"><path d="M1.3 4.3 L1.3 17 L22.5 17 L22.5 4.3" fill="none" stroke="#b4b4b4" stroke-width="2"/><path d="M6.2 17 L6.2 11 M16.9 17 L16.9 11" stroke="#b4b4b4" stroke-width="1.8"/><path d="M7.4 0.3 L16.4 0.3 L16.4 4 L13 6.2 L13 16.2 L10.6 16.2 L10.6 6.2 L7.4 4Z" fill="#b4b4b4"/></svg>
<svg style="left:1783px;top:861px;" width="24" height="21.5" viewBox="0 0 23 21"><g fill="#b4b4b4"><rect x="7.2" y="0" width="8.7" height="6.8"/><rect x="0" y="14" width="8.7" height="7"/><rect x="14.3" y="14" width="8.7" height="7"/></g><path d="M11.5 6 L11.5 11 M4.3 15 L4.3 10.8 L18.7 10.8 L18.7 15" fill="none" stroke="#b4b4b4" stroke-width="1.7"/></svg>
<div style="left:1816px;top:858px;width:1.5px;height:29px;background:#2c2c2c;"></div>
<svg style="left:1826.5px;top:861px;" width="21.5" height="21.5" viewBox="0 0 21.5 21.5"><circle cx="10.7" cy="10.7" r="10.6" fill="#b4b4b4"/><path d="M13.24 9.78 Q16.88 12.95 12.90 21.07 M12.77 12.44 Q11.84 17.17 2.82 17.79 M10.23 13.36 Q5.67 14.92 0.62 7.42 M8.16 11.62 Q4.52 8.45 8.50 0.33 M8.63 8.96 Q9.56 4.23 18.58 3.61 M11.17 8.04 Q15.73 6.48 20.78 13.98 " fill="none" stroke="#262626" stroke-width="1.5"/><circle cx="10.7" cy="10.7" r="2.7" fill="#262626"/></svg>
<span class="t" id="t61" style="left:1859.5px;top:861.0px;font-size:20px;line-height:26px;color:#2f9bf5;letter-spacing:-0.853px;">+0.0</span>
<div style="left:2480px;top:50.4px;width:17.3px;height:827.5px;background:#343434;border-radius:9px;"></div>
<span class="t" id="t62" style="left:2141px;top:60.5px;font-size:19px;line-height:25px;color:#c6c6c6;letter-spacing:0.228px;">Info</span>
<span class="t" id="t63" style="left:2141px;top:112.5px;font-size:19px;line-height:25px;color:#c6c6c6;letter-spacing:0.087px;">Audio</span>
<span class="t" id="t64" style="left:2141px;top:165.0px;font-size:19px;line-height:25px;color:#c6c6c6;letter-spacing:-0.012px;">Preview</span>
<span class="t" id="t65" style="left:2141px;top:217.0px;font-size:19px;line-height:25px;color:#c6c6c6;letter-spacing:-0.296px;">Effects &amp; Presets</span>
<span class="t" id="t66" style="left:2141px;top:269.0px;font-size:19px;line-height:25px;color:#c6c6c6;letter-spacing:-0.056px;">Align</span>
<span class="t" id="t67" style="left:2141px;top:321.0px;font-size:19px;line-height:25px;color:#c6c6c6;letter-spacing:-0.103px;">Libraries</span>
<span class="t" id="t68" style="left:2141px;top:373.0px;font-size:19px;line-height:25px;color:#c6c6c6;letter-spacing:-0.226px;">Character</span>
<div style="left:2122px;top:96px;width:354px;height:3px;background:#1b1b1b;"></div>
<div style="left:2122px;top:148.4px;width:354px;height:3px;background:#1b1b1b;"></div>
<div style="left:2122px;top:200.4px;width:354px;height:3px;background:#1b1b1b;"></div>
<div style="left:2122px;top:252.5px;width:354px;height:3px;background:#1b1b1b;"></div>
<div style="left:2122px;top:304.5px;width:354px;height:3px;background:#1b1b1b;"></div>
<div style="left:2122px;top:356.5px;width:354px;height:3px;background:#1b1b1b;"></div>
<div style="left:2445px;top:381.2px;width:14.5px;height:1.9px;background:#c0c0c0;"></div>
<div style="left:2445px;top:386.4px;width:14.5px;height:1.9px;background:#c0c0c0;"></div>
<div style="left:2445px;top:391.59999999999997px;width:14.5px;height:1.9px;background:#c0c0c0;"></div>
<div style="left:2130px;top:425px;width:211px;height:31px;background:#1a1a1a;border-radius:5px;border:1px solid #333;"></div>
<div style="left:2310px;top:426px;width:1.2px;height:29px;background:#303030;"></div>
<span class="t" id="t69" style="left:2141.5px;top:428.5px;font-size:19px;line-height:25px;color:#d6d6d6;letter-spacing:-0.131px;">Baskerville</span>
<svg style="left:2319px;top:437.5px;" width="13" height="9" viewBox="0 0 13 9"><path d="M1 1.2 L6.5 7.2 L12 1.2" fill="none" stroke="#c8c8c8" stroke-width="1.8"/></svg>
<div style="left:2130px;top:466.5px;width:211px;height:31px;background:#1a1a1a;border-radius:5px;border:1px solid #333;"></div>
<div style="left:2310px;top:467.5px;width:1.2px;height:29px;background:#303030;"></div>
<span class="t" id="t70" style="left:2141.5px;top:470.0px;font-size:19px;line-height:25px;color:#d6d6d6;letter-spacing:-0.469px;">Regular</span>
<svg style="left:2319px;top:479.0px;" width="13" height="9" viewBox="0 0 13 9"><path d="M1 1.2 L6.5 7.2 L12 1.2" fill="none" stroke="#c8c8c8" stroke-width="1.8"/></svg>
<svg style="left:2351px;top:428px;" width="32" height="31" viewBox="0 0 32 31"><path d="M16 10.5 L4.8 21.7 Q2.2 24.4 1.6 27 Q1.5 29.6 4 29.5 Q6.5 29 9.3 26.2 L20.5 15" fill="none" stroke="#c0c0c0" stroke-width="1.6"/><path d="M15.5 7.5 L24 16" stroke="#c0c0c0" stroke-width="4" stroke-linecap="butt"/><path d="M20.5 11.5 L26 6" stroke="#c0c0c0" stroke-width="6.8" stroke-linecap="round"/></svg>
<div style="left:2415px;top:446.5px;width:52.3px;height:51.6px;background:#000;"></div>
<div style="left:2445px;top:464px;width:4.7px;height:17px;background:#2e2e2e;"></div>
<div style="left:2433px;top:476.3px;width:16.7px;height:4.7px;background:#2e2e2e;"></div>
<div style="left:2393px;top:424px;width:51.7px;height:51.3px;background:#202020;border:1.7px solid #000;"></div>
<svg style="left:2446px;top:427px;" width="20" height="20" viewBox="0 0 20 20"><path d="M5.5 5.6 Q14.5 5 14.5 14.5" fill="none" stroke="#c2c2c2" stroke-width="3.2"/><path d="M6.3 0 L0 5.8 L6.3 11.4Z" fill="#c2c2c2"/><path d="M9 14 L19.8 14 L14.5 19.7Z" fill="#c2c2c2"/></svg>
<div style="left:2349.2px;top:467px;width:34.8px;height:30px;background:#b4b4b4;"></div>
<div style="left:2351px;top:469px;width:31.2px;height:12px;background:#000;"></div>
<div style="left:2351px;top:484.8px;width:31.2px;height:10.4px;background:#fff;"></div>
<div style="left:2394px;top:476px;width:19.8px;height:19.2px;background:#fff;border:1.2px solid #c0c0c0;"></div>
<svg style="left:2395px;top:477px;" width="18" height="17.5" viewBox="0 0 18 17.5"><path d="M1 16 L16.8 1" stroke="#e8343c" stroke-width="1.5"/></svg>
<div style="left:2130px;top:508px;width:338px;height:1.2px;background:#333333;"></div>
<div style="left:2130px;top:596px;width:338px;height:1.2px;background:#333333;"></div>
<div style="left:2130px;top:649.5px;width:338px;height:1.2px;background:#333333;"></div>
<div style="left:2130px;top:739px;width:338px;height:1.2px;background:#333333;"></div>
<svg style="left:2124.5px;top:530px;" width="18" height="12" viewBox="0 0 18 12"><path d="M0 0 L11 0 L11 3.91 L9.7 3.91 L9.7 2.185 L6.875 2.185 L6.875 10.235 L8.25 10.235 L8.25 11.5 L2.75 11.5 L2.75 10.235 L4.125 10.235 L4.125 2.185 L1.3 2.185 L1.3 3.91 L0 3.91Z" fill="#bdbdbd" transform="translate(3,0)"/></svg>
<svg style="left:2134.3px;top:518px;" width="30" height="24" viewBox="0 0 30 24"><path d="M0 0 L23 0 L23 7.82 L20.47 7.82 L20.47 4.37 L14.375 4.37 L14.375 20.47 L17.25 20.47 L17.25 23 L5.75 23 L5.75 20.47 L8.625 20.47 L8.625 4.37 L2.53 4.37 L2.53 7.82 L0 7.82Z" fill="#bdbdbd" transform="translate(3,0)"/></svg>
<span class="t" id="t71" style="left:2173px;top:517.5px;font-size:19px;line-height:25px;color:#2f9bf5;letter-spacing:-1.427px;">15</span>
<span class="t" id="t72" style="left:2198px;top:517.5px;font-size:19px;line-height:25px;color:#b4b4b4;letter-spacing:0.281px;">px</span>
<svg style="left:2250px;top:525.0px;" width="12" height="11" viewBox="0 0 12 11"><path d="M0.3 0.5 L11.7 0.5 L6 10.5Z" fill="#a0a0a0"/></svg>
<svg style="left:2310px;top:518px;" width="32" height="33" viewBox="0 0 32 33"><text x="20" y="13.6" font-family="Liberation Sans" font-size="17" fill="#b8b8b8" text-anchor="middle">A</text><text x="20" y="29.3" font-family="Liberation Sans" font-size="17" fill="#b8b8b8" text-anchor="middle">A</text><path d="M11 15 L29 15 M11 30.7 L29 30.7" stroke="#b8b8b8" stroke-width="1.4"/><path d="M5.4 17 L5.4 28" stroke="#b8b8b8" stroke-width="1.7"/><path d="M1.5 19 L5.4 14.2 L9.3 19Z M1.5 26 L5.4 30.8 L9.3 26Z" fill="#b8b8b8"/></svg>
<span class="t" id="t73" style="left:2367px;top:517.5px;font-size:19px;line-height:25px;color:#2f9bf5;letter-spacing:0.116px;">Auto</span>
<svg style="left:2446px;top:525.5px;" width="12" height="11" viewBox="0 0 12 11"><path d="M0.3 0.5 L11.7 0.5 L6 10.5Z" fill="#a0a0a0"/></svg>
<svg style="left:2127px;top:555px;" width="32" height="30" viewBox="0 0 32 30"><text x="0" y="18" font-family="Liberation Sans" font-size="21" fill="#b8b8b8" textLength="31" lengthAdjust="spacingAndGlyphs">V/A</text><path d="M30 25 L17 25" stroke="#b8b8b8" stroke-width="1.7"/><path d="M21 20.5 L15 25 L21 29.5Z" fill="#b8b8b8"/></svg>
<span class="t" id="t74" style="left:2173px;top:554.0px;font-size:19px;line-height:25px;color:#6c6c6c;letter-spacing:0.041px;">Metrics</span>
<svg style="left:2250px;top:561.5px;" width="12" height="11" viewBox="0 0 12 11"><path d="M0.3 0.5 L11.7 0.5 L6 10.5Z" fill="#8a8a8a"/></svg>
<svg style="left:2313px;top:555px;" width="34" height="31" viewBox="0 0 34 31"><rect x="1.5" y="1" width="31" height="19" fill="#b8b8b8"/><text x="17" y="17.5" font-family="Liberation Sans" font-weight="700" font-size="18.5" fill="#262626" text-anchor="middle" textLength="27" lengthAdjust="spacingAndGlyphs">VA</text><path d="M3 26 L31 26" stroke="#b8b8b8" stroke-width="1.6"/><path d="M7 22 L1.5 26 L7 30Z M27 22 L32.5 26 L27 30Z" fill="#b8b8b8"/></svg>
<span class="t" id="t75" style="left:2367px;top:554.0px;font-size:19px;line-height:25px;color:#2f9bf5;letter-spacing:-0.078px;">0</span>
<svg style="left:2446px;top:561.5px;" width="12" height="11" viewBox="0 0 12 11"><path d="M0.3 0.5 L11.7 0.5 L6 10.5Z" fill="#a0a0a0"/></svg>
<svg style="left:2132.5px;top:609.5px;" width="25" height="22" viewBox="0 0 25 22"><rect x="0" y="0.4" width="24.2" height="1.5" fill="#b8b8b8"/><rect x="0" y="6.8" width="24.2" height="3.4" fill="#b8b8b8"/><rect x="0" y="14.8" width="24.2" height="5.6" fill="#b8b8b8"/></svg>
<span class="t" id="t76" style="left:2172.5px;top:608.5px;font-size:19px;line-height:25px;color:#2f9bf5;letter-spacing:-1.169px;">0.3</span>
<span class="t" id="t77" style="left:2202px;top:608.5px;font-size:19px;line-height:25px;color:#b4b4b4;letter-spacing:0.281px;">px</span>
<svg style="left:2250px;top:615.0px;" width="12" height="11" viewBox="0 0 12 11"><path d="M0.3 0.5 L11.7 0.5 L6 10.5Z" fill="#a0a0a0"/></svg>
<div style="left:2270px;top:606px;width:198.5px;height:31px;background:#1a1a1a;border-radius:5px;border:1px solid #333;"></div>
<span class="t" id="t78" style="left:2282px;top:609.0px;font-size:19px;line-height:25px;color:#d6d6d6;letter-spacing:-0.156px;">Fill Over Stroke</span>
<svg style="left:2446px;top:617.5px;" width="13" height="9" viewBox="0 0 13 9"><path d="M1 1.2 L6.5 7.2 L12 1.2" fill="none" stroke="#c8c8c8" stroke-width="1.8"/></svg>
<svg style="left:2129px;top:661px;" width="14" height="27" viewBox="0 0 14 27"><path d="M5 3 L5 24" stroke="#b8b8b8" stroke-width="1.6"/><path d="M1 7 L5 1.5 L9 7Z M1 20 L5 25.5 L9 20Z" fill="#b8b8b8"/></svg>
<svg style="left:2138px;top:663px;" width="27" height="24" viewBox="0 0 27 24"><path d="M0 0 L20.5 0 L20.5 7.82 L18.245 7.82 L18.245 4.37 L12.8125 4.37 L12.8125 20.47 L15.375 20.47 L15.375 23 L5.125 23 L5.125 20.47 L7.6875 20.47 L7.6875 4.37 L2.255 4.37 L2.255 7.82 L0 7.82Z" fill="#bdbdbd" transform="translate(3,0)"/></svg>
<span class="t" id="t79" style="left:2172.5px;top:659.5px;font-size:19px;line-height:25px;color:#2f9bf5;letter-spacing:-1.081px;">100</span>
<span class="t" id="t80" style="left:2209px;top:659.5px;font-size:19px;line-height:25px;color:#b4b4b4;letter-spacing:-0.406px;">%</span>
<svg style="left:2250px;top:667.5px;" width="12" height="11" viewBox="0 0 12 11"><path d="M0.3 0.5 L11.7 0.5 L6 10.5Z" fill="#a0a0a0"/></svg>
<svg style="left:2312.7px;top:662.7px;" width="30" height="22" viewBox="0 0 30 22"><path d="M0 0 L23.5 0 L23.5 7.344000000000001 L20.915 7.344000000000001 L20.915 4.104 L14.6875 4.104 L14.6875 19.224 L17.625 19.224 L17.625 21.6 L5.875 21.6 L5.875 19.224 L8.8125 19.224 L8.8125 4.104 L2.585 4.104 L2.585 7.344000000000001 L0 7.344000000000001Z" fill="#bdbdbd" transform="translate(3,0)"/></svg>
<svg style="left:2313px;top:686px;" width="31" height="10" viewBox="0 0 31 10"><path d="M3 5 L28 5" stroke="#b8b8b8" stroke-width="1.6"/><path d="M6.5 1 L1 5 L6.5 9Z M24.5 1 L30 5 L24.5 9Z" fill="#b8b8b8"/></svg>
<span class="t" id="t81" style="left:2367px;top:661.5px;font-size:19px;line-height:25px;color:#2f9bf5;letter-spacing:-1.081px;">100</span>
<span class="t" id="t82" style="left:2403px;top:661.5px;font-size:19px;line-height:25px;color:#b4b4b4;letter-spacing:0.094px;">%</span>
<svg style="left:2446px;top:669.0px;" width="12" height="11" viewBox="0 0 12 11"><path d="M0.3 0.5 L11.7 0.5 L6 10.5Z" fill="#a0a0a0"/></svg>
<svg style="left:2128px;top:701px;" width="30" height="29" viewBox="0 0 30 29"><text x="0" y="17.5" font-family="Liberation Sans" font-size="19" fill="#b8b8b8">A</text><text x="15.5" y="12" font-family="Liberation Sans" font-size="12" fill="#b8b8b8">a</text><path d="M0.5 20.3 L13 20.3 M16 14.5 L22.5 14.5" stroke="#b8b8b8" stroke-width="1.4"/><path d="M19.5 18 L19.5 27.5" stroke="#b8b8b8" stroke-width="1.6"/><path d="M15.5 21.5 L19.5 16.5 L23.5 21.5Z" fill="#b8b8b8"/></svg>
<span class="t" id="t83" style="left:2172.5px;top:698.0px;font-size:19px;line-height:25px;color:#2f9bf5;letter-spacing:-0.078px;">0</span>
<span class="t" id="t84" style="left:2189px;top:698.0px;font-size:19px;line-height:25px;color:#b4b4b4;letter-spacing:-0.719px;">px</span>
<svg style="left:2250px;top:705.0px;" width="12" height="11" viewBox="0 0 12 11"><path d="M0.3 0.5 L11.7 0.5 L6 10.5Z" fill="#a0a0a0"/></svg>
<svg style="left:2313px;top:700px;" width="31" height="29" viewBox="0 0 31 29"><path d="M6 2.2 L6 17.5 M25 2.2 L25 17.5" stroke="#b8b8b8" stroke-width="1.7" stroke-dasharray="1.5 1.6"/><g fill="none" stroke="#b8b8b8" stroke-width="1.5" stroke-linecap="round"><path d="M10 5.6 L21 5"/><path d="M14.6 2.4 Q13.6 9 14.6 16"/><path d="M19 7.6 Q17.5 13.5 12.5 15.8 Q9.2 16.8 9 13.8 Q9.4 10 15.5 9.4 Q22.2 9.3 22 13 Q21.6 16.2 17.5 17"/></g><path d="M1.5 23.5 L8 23.5 M29.5 23.5 L23 23.5" stroke="#b8b8b8" stroke-width="1.5"/><path d="M6.5 20 L11 23.5 L6.5 27Z M24.5 20 L20 23.5 L24.5 27Z" fill="#b8b8b8"/></svg>
<span class="t" id="t85" style="left:2367px;top:696.5px;font-size:19px;line-height:25px;color:#2f9bf5;letter-spacing:-0.078px;">0</span>
<span class="t" id="t86" style="left:2384px;top:696.5px;font-size:19px;line-height:25px;color:#b4b4b4;letter-spacing:-2.406px;">%</span>
<svg style="left:2446px;top:704.0px;" width="12" height="11" viewBox="0 0 12 11"><path d="M0.3 0.5 L11.7 0.5 L6 10.5Z" fill="#a0a0a0"/></svg>
<svg style="left:2171px;top:756.8px;" width="28" height="19" viewBox="0 0 28 19"><path d="M0 0 L21.3 0 L21.3 6.256 L18.957 6.256 L18.957 3.6799999999999997 L13.7385 3.6799999999999997 L13.7385 16.375999999999998 L16.0815 16.375999999999998 L16.0815 18.4 L5.218500000000001 18.4 L5.218500000000001 16.375999999999998 L7.5615000000000006 16.375999999999998 L7.5615000000000006 3.6799999999999997 L2.343 3.6799999999999997 L2.343 6.256 L0 6.256Z" fill="#bdbdbd" transform="translate(3,0)"/></svg>
<svg style="left:2219px;top:756.8px;" width="22" height="19" viewBox="0 0 22 19"><path d="M0 0 L15.5 0 L15.5 6.256 L13.795 6.256 L13.795 2.2079999999999997 L8.9125 2.2079999999999997 L8.9125 16.375999999999998 L11.625 16.375999999999998 L11.625 18.4 L3.875 18.4 L3.875 16.375999999999998 L6.5875 16.375999999999998 L6.5875 2.2079999999999997 L1.705 2.2079999999999997 L1.705 6.256 L0 6.256Z" fill="#bdbdbd" transform="translate(3,0) skewX(-17)"/></svg>
<svg style="left:2260.9px;top:756.8px;" width="21" height="19" viewBox="0 0 21 19"><path d="M0 0 L14.3 0 L14.3 6.256 L12.727 6.256 L12.727 2.2079999999999997 L8.3655 2.2079999999999997 L8.3655 16.375999999999998 L10.725000000000001 16.375999999999998 L10.725000000000001 18.4 L3.575 18.4 L3.575 16.375999999999998 L5.9345 16.375999999999998 L5.9345 2.2079999999999997 L1.5730000000000002 2.2079999999999997 L1.5730000000000002 6.256 L0 6.256Z" fill="#bdbdbd" transform="translate(3,0)"/></svg>
<svg style="left:2278.5px;top:756.8px;" width="21" height="19" viewBox="0 0 21 19"><path d="M0 0 L14.5 0 L14.5 6.256 L12.905 6.256 L12.905 2.2079999999999997 L8.4825 2.2079999999999997 L8.4825 16.375999999999998 L10.875 16.375999999999998 L10.875 18.4 L3.625 18.4 L3.625 16.375999999999998 L6.0175 16.375999999999998 L6.0175 2.2079999999999997 L1.595 2.2079999999999997 L1.595 6.256 L0 6.256Z" fill="#bdbdbd" transform="translate(3,0)"/></svg>
<svg style="left:2304.6px;top:756.8px;" width="24" height="19" viewBox="0 0 24 19"><path d="M0 0 L17 0 L17 6.256 L15.129999999999999 6.256 L15.129999999999999 2.2079999999999997 L9.775 2.2079999999999997 L9.775 16.375999999999998 L12.75 16.375999999999998 L12.75 18.4 L4.25 18.4 L4.25 16.375999999999998 L7.225 16.375999999999998 L7.225 2.2079999999999997 L1.87 2.2079999999999997 L1.87 6.256 L0 6.256Z" fill="#bdbdbd" transform="translate(3,0)"/></svg>
<svg style="left:2321.6px;top:761.8px;" width="21" height="14" viewBox="0 0 21 14"><path d="M0 0 L14.6 0 L14.6 4.556 L12.994 4.556 L12.994 2.278 L8.76 2.278 L8.76 11.926 L10.95 11.926 L10.95 13.4 L3.65 13.4 L3.65 11.926 L5.84 11.926 L5.84 2.278 L1.6059999999999999 2.278 L1.6059999999999999 4.556 L0 4.556Z" fill="#bdbdbd" transform="translate(3,0)"/></svg>
<svg style="left:2359.7px;top:756.8px;" width="24" height="19" viewBox="0 0 24 19"><path d="M0 0 L17.3 0 L17.3 6.256 L15.397 6.256 L15.397 2.2079999999999997 L9.9475 2.2079999999999997 L9.9475 16.375999999999998 L12.975000000000001 16.375999999999998 L12.975000000000001 18.4 L4.325 18.4 L4.325 16.375999999999998 L7.3525 16.375999999999998 L7.3525 2.2079999999999997 L1.903 2.2079999999999997 L1.903 6.256 L0 6.256Z" fill="#bdbdbd" transform="translate(3,0)"/></svg>
<span style="left:2382px;top:754px;font-family:'Liberation Serif',serif;font-weight:700;font-size:10.5px;line-height:10.5px;color:#bdbdbd;">1</span>
<svg style="left:2403.4px;top:756.8px;" width="24" height="19" viewBox="0 0 24 19"><path d="M0 0 L17.3 0 L17.3 6.256 L15.397 6.256 L15.397 2.2079999999999997 L9.9475 2.2079999999999997 L9.9475 16.375999999999998 L12.975000000000001 16.375999999999998 L12.975000000000001 18.4 L4.325 18.4 L4.325 16.375999999999998 L7.3525 16.375999999999998 L7.3525 2.2079999999999997 L1.903 2.2079999999999997 L1.903 6.256 L0 6.256Z" fill="#bdbdbd" transform="translate(3,0)"/></svg>
<span style="left:2423.5px;top:768.5px;font-family:'Liberation Serif',serif;font-weight:700;font-size:10.5px;line-height:10.5px;color:#bdbdbd;">1</span>
<div style="left:2123px;top:796.5px;width:353px;height:3px;background:#191919;"></div>
<span class="t" id="t87" style="left:2141px;top:812.5px;font-size:19px;line-height:25px;color:#c6c6c6;letter-spacing:-0.439px;">Paragraph</span>
<div style="left:2123px;top:848px;width:353px;height:3px;background:#191919;"></div>
<span class="t" id="t88" style="left:2141px;top:864.5px;font-size:19px;line-height:25px;color:#c6c6c6;letter-spacing:-0.416px;">Tracker</span>
<svg style="left:21px;top:919.5px;" width="10" height="10" viewBox="0 0 10 10"><path d="M1 1 L9 9 M9 1 L1 9" stroke="#a8a8a8" stroke-width="1.4"/></svg>
<div style="left:47px;top:913.3px;width:17px;height:17.2px;background:#b5a07d;"></div>
<span class="t" id="t89" style="left:83.5px;top:911.0px;font-size:19px;line-height:25px;color:#d2d2d2;letter-spacing:-0.188px;">Comp 1</span>
<div style="left:166.5px;top:918.0px;width:14.5px;height:2px;background:#c0c0c0;"></div>
<div style="left:166.5px;top:923.5px;width:14.5px;height:2px;background:#c0c0c0;"></div>
<div style="left:166.5px;top:929.0px;width:14.5px;height:2px;background:#c0c0c0;"></div>
<div style="left:21px;top:942px;width:161px;height:3px;background:#c4c4c4;"></div>
<div style="left:245px;top:913.3px;width:17px;height:17.2px;background:#b5a07d;"></div>
<span class="t" id="t90" style="left:281.5px;top:911.0px;font-size:19px;line-height:25px;color:#b4b4b4;letter-spacing:-0.074px;">Pre-comp 1</span>
<div style="left:474.5px;top:913.3px;width:17px;height:17.2px;background:#b5a07d;"></div>
<span class="t" id="t91" style="left:511px;top:911.0px;font-size:19px;line-height:25px;color:#b4b4b4;letter-spacing:-0.484px;">Paragraph 2</span>
<div style="left:707px;top:913.3px;width:17px;height:17.2px;background:#b5a07d;"></div>
<span class="t" id="t92" style="left:743.5px;top:911.0px;font-size:19px;line-height:25px;color:#b4b4b4;letter-spacing:-0.436px;">Paragraph 5</span>
<div style="left:939.5px;top:913.3px;width:17px;height:17.2px;background:#b5a07d;"></div>
<span class="t" id="t93" style="left:976px;top:911.0px;font-size:19px;line-height:25px;color:#b4b4b4;letter-spacing:0.069px;">Alive</span>
<div style="left:1113px;top:913.3px;width:17px;height:17.2px;background:#b5a07d;"></div>
<span class="t" id="t94" style="left:1149.5px;top:911.0px;font-size:19px;line-height:25px;color:#b4b4b4;letter-spacing:-0.341px;">Paragraph 4</span>
<div style="left:1345.5px;top:913.3px;width:17px;height:17.2px;background:#b5a07d;"></div>
<span class="t" id="t95" style="left:1382.5px;top:911.0px;font-size:19px;line-height:25px;color:#b4b4b4;letter-spacing:-0.388px;">Paragraph 3</span>
<div style="left:1578.5px;top:913.3px;width:17px;height:17.2px;background:#b5a07d;"></div>
<span class="t" id="t96" style="left:1615px;top:911.0px;font-size:19px;line-height:25px;color:#b4b4b4;letter-spacing:-0.097px;">Last text</span>
<span class="t" id="t97" style="left:21.5px;top:948.5px;font-size:30px;line-height:39px;color:#2f9bf5;font-weight:700;transform:scaleX(0.9369);transform-origin:0 0;-webkit-text-stroke:0;">0;00;03;01</span>
<span class="t" id="t98" style="left:23px;top:982.5px;font-size:17.5px;line-height:23px;color:#2273c4;letter-spacing:-0.193px;">00091 (29.97 fps)</span>
<div style="left:180.5px;top:961.5px;width:447px;height:31.5px;background:#161616;border-radius:5px;border:1px solid #2e2e2e;"></div>
<svg style="left:190px;top:966px;" width="32" height="22" viewBox="0 0 32 22"><circle cx="12.5" cy="8" r="5.6" fill="none" stroke="#c4c4c4" stroke-width="1.8"/><path d="M8.6 12 L2 19" stroke="#c4c4c4" stroke-width="2.2" stroke-linecap="round"/><path d="M21 14 L30.5 14 L25.7 18.8Z" fill="#c4c4c4"/></svg>
<svg style="left:655px;top:968px;" width="30" height="23" viewBox="0 0 30 23"><g fill="#b4b4b4"><rect x="3" y="0.8" width="7" height="4.4" rx="0.8"/><rect x="19" y="0.8" width="7.5" height="4.4" rx="0.8"/><rect x="19" y="9.2" width="7.5" height="4.4" rx="0.8"/></g><path d="M0 3 L20 3 M14.5 3 L14.5 11.4 L20 11.4" fill="none" stroke="#b4b4b4" stroke-width="1.4"/><path d="M22 17 L29.5 17 L25.7 21.3Z" fill="#b4b4b4"/></svg>
<svg style="left:712px;top:962px;" width="31" height="30" viewBox="0 0 31 30"><g stroke="#b4b4b4" stroke-width="1.7"><path d="M8.5 0.5 L8.5 15.5 M1 8 L16 8 M3.2 2.7 L13.8 13.3 M13.8 2.7 L3.2 13.3"/></g><circle cx="8.5" cy="8" r="3.6" fill="#b4b4b4"/><path d="M20.5 10.8 L29.5 15 L29.5 24.5 L20.5 28.8 L11.5 24.5 L11.5 15Z" fill="#262626" stroke="#b4b4b4" stroke-width="1.7"/><path d="M11.5 15 L20.5 19.5 L29.5 15 M20.5 19.5 L20.5 28.8" fill="none" stroke="#b4b4b4" stroke-width="1.7"/></svg>
<svg style="left:772px;top:966px;" width="30" height="23" viewBox="0 0 30 23"><rect x="0.5" y="13" width="28.5" height="8.5" fill="#7e7e7e"/><path d="M2.5 12 Q3.5 1 14.8 1 Q26 1 27 12 L24.5 12 L24.5 9.8 L22.3 9.8 L22.3 12 L17 12 L17 17.5 Q17 19.8 14.8 19.8 Q12.6 19.8 12.6 17.5 L12.6 12 L7.3 12 L7.3 9.8 L5 9.8 L5 12Z" fill="#b4b4b4"/><circle cx="11" cy="7" r="2" fill="#262626"/><circle cx="18.6" cy="7" r="2" fill="#262626"/></svg>
<svg style="left:820px;top:965px;" width="25" height="26" viewBox="0 0 25 26"><path d="M7 7 L1 7 L1 25 L17 25 L17 21.5" fill="none" stroke="#b4b4b4" stroke-width="1.6"/><g fill="#b4b4b4"><rect x="7.5" y="0.5" width="17" height="20.5"/></g><g fill="#262626"><rect x="8.8" y="2.5" width="1.8" height="2.2"/><rect x="8.8" y="7" width="1.8" height="2.2"/><rect x="8.8" y="11.5" width="1.8" height="2.2"/><rect x="8.8" y="16" width="1.8" height="2.2"/><rect x="21.4" y="2.5" width="1.8" height="2.2"/><rect x="21.4" y="7" width="1.8" height="2.2"/><rect x="21.4" y="11.5" width="1.8" height="2.2"/><rect x="21.4" y="16" width="1.8" height="2.2"/><rect x="12.5" y="9.6" width="7" height="1.7"/></g><g fill="#b4b4b4"><rect x="2.2" y="9.5" width="1.6" height="2"/><rect x="2.2" y="13.5" width="1.6" height="2"/><rect x="2.2" y="17.5" width="1.6" height="2"/><rect x="2.2" y="21.5" width="1.6" height="2"/></g></svg>
<svg style="left:864px;top:965px;" width="26" height="26" viewBox="0 0 26 26"><circle cx="10" cy="16" r="8.6" fill="none" stroke="#b4b4b4" stroke-width="1.6"/><circle cx="12.7" cy="13" r="8.6" fill="#262626" stroke="#b4b4b4" stroke-width="1.6"/><circle cx="16" cy="9.8" r="8.6" fill="#777" stroke="#b4b4b4" stroke-width="1.7"/></svg>
<svg style="left:921px;top:963px;" width="30" height="28" viewBox="0 0 30 28"><rect x="3.5" y="5" width="25" height="21.5" fill="none" stroke="#b4b4b4" stroke-width="1.8"/><path d="M6.5 10.5 Q12.5 10 15.5 16 Q18.5 22 25 21.5" fill="none" stroke="#b4b4b4" stroke-width="1.7"/><path d="M12 0.5 L12 5 M16.5 2 L16.5 5 M20.5 2 L20.5 5 M24.5 0.5 L24.5 5 M0.5 10.5 L3.5 10.5 M0.5 15.5 L3.5 15.5 M0.5 21 L3.5 21" stroke="#b4b4b4" stroke-width="1.6"/></svg>
<div style="left:4px;top:1009px;width:975px;height:2px;background:#0c0c0c;"></div>
<div style="left:4px;top:1011px;width:975px;height:31px;background:#303030;"></div>
<div style="left:4px;top:1042px;width:975px;height:2px;background:#0c0c0c;"></div>
<svg style="left:12.5px;top:1020px;" width="19" height="14" viewBox="0 0 19 14"><path d="M0.5 7 Q9.5 -3.2 18.5 7 Q9.5 16.8 0.5 7Z" fill="#b4b4b4"/><circle cx="9.5" cy="6.6" r="4" fill="#303030"/><circle cx="9.5" cy="6.6" r="2.3" fill="#b4b4b4"/><circle cx="10.6" cy="5.4" r="0.9" fill="#303030"/></svg>
<svg style="left:38px;top:1016.5px;" width="21" height="21" viewBox="0 0 21 21"><path d="M0.5 6 L4 6 L9.2 0.8 L9.2 20.2 L4 15 L0.5 15Z" fill="#b4b4b4"/><path d="M12 6.3 Q16 10.5 12 14.7 M12.5 1.8 Q21.5 10.5 12.5 19.2" fill="none" stroke="#b4b4b4" stroke-width="1.6"/></svg>
<div style="left:67.5px;top:1020.5px;width:13px;height:13px;background:#b4b4b4;border-radius:50%;"></div>
<svg style="left:91px;top:1015px;" width="18" height="21" viewBox="0 0 18 21"><path d="M4.5 10 L4.5 6.2 Q4.5 2 9 2 Q13.5 2 13.5 6.2 L13.5 10" fill="none" stroke="#b4b4b4" stroke-width="2"/><rect x="1" y="9.5" width="16" height="10.5" fill="#b4b4b4"/><circle cx="9" cy="13.6" r="1.8" fill="#303030"/><rect x="8.1" y="14" width="1.8" height="3.8" fill="#303030"/></svg>
<div style="left:120.5px;top:1018.5px;width:1.6px;height:17px;background:#0a0a0a;"></div>
<div style="left:176px;top:1018.5px;width:1.6px;height:17px;background:#0a0a0a;"></div>
<div style="left:233.5px;top:1018.5px;width:1.6px;height:17px;background:#0a0a0a;"></div>
<div style="left:459px;top:1018.5px;width:1.6px;height:17px;background:#0a0a0a;"></div>
<div style="left:747.5px;top:1018.5px;width:1.6px;height:17px;background:#0a0a0a;"></div>
<div style="left:950.5px;top:1018.5px;width:1.6px;height:17px;background:#0a0a0a;"></div>
<svg style="left:144px;top:1015.5px;" width="23" height="23" viewBox="0 0 22 22"><path d="M1 1 L9.5 1 L20 11.5 L11.5 20 L1 9.5Z" fill="#b0b0b0"/><circle cx="5.3" cy="5.3" r="2" fill="#303030"/></svg>
<span class="t" id="t99" style="left:186px;top:1017.0px;font-size:16.5px;line-height:21px;color:#a8a8a8;letter-spacing:-0.188px;">#</span>
<span class="t" id="t100" style="left:243px;top:1017.0px;font-size:16.5px;line-height:21px;color:#a8a8a8;letter-spacing:-0.513px;">Layer Name</span>
<span class="t" id="t101" style="left:469px;top:1017.0px;font-size:16.5px;line-height:21px;color:#a8a8a8;letter-spacing:-0.223px;">Mode</span>
<span class="t" id="t102" style="left:601px;top:1017.0px;font-size:16.5px;line-height:21px;color:#a8a8a8;letter-spacing:-0.594px;">T</span>
<span class="t" id="t103" style="left:630.5px;top:1017.0px;font-size:16.5px;line-height:21px;color:#a8a8a8;letter-spacing:-0.312px;">TrkMat</span>
<span class="t" id="t104" style="left:757.5px;top:1017.0px;font-size:16.5px;line-height:21px;color:#a8a8a8;letter-spacing:-0.285px;">Parent &amp; Link</span>
<div style="left:4px;top:1043.0px;width:975px;height:29.7px;background:#2b2b2b;"></div>
<div style="left:4px;top:1070.5px;width:975px;height:1.4px;background:#232323;"></div>
<div style="left:11px;top:1044.2px;width:22.5px;height:21.5px;background:#1f1f1f;"></div>
<div style="left:63px;top:1044.2px;width:22.5px;height:21.5px;background:#1f1f1f;"></div>
<div style="left:89.3px;top:1044.2px;width:22.3px;height:21.5px;background:#1f1f1f;"></div>
<svg style="left:12.5px;top:1048.5px;" width="19" height="14" viewBox="0 0 19 14"><path d="M0.5 7 Q9.5 -3.2 18.5 7 Q9.5 16.8 0.5 7Z" fill="#c6c6c6"/><circle cx="9.5" cy="6.6" r="4" fill="#1f1f1f"/><circle cx="9.5" cy="6.6" r="2.3" fill="#c6c6c6"/><circle cx="10.6" cy="5.4" r="0.9" fill="#1f1f1f"/></svg>
<svg style="left:130px;top:1048.7px;" width="14" height="13" viewBox="0 0 14 13"><path d="M0.5 0.5 L13.5 6.5 L0.5 12.5Z" fill="#b4b4b4"/></svg>
<div style="left:151.5px;top:1045.4px;width:21px;height:20.6px;background:#b5a07d;border:0.7px solid rgba(0,0,0,0.35);"></div>
<span class="t" id="t105" style="left:188px;top:1043.0px;font-size:19px;line-height:25px;color:#a8a8a8;font-weight:700;letter-spacing:0.240px;">35</span>
<svg style="left:236.5px;top:1044.0px;" width="28" height="22.5" viewBox="0 0 29 24"><rect x="0.4" y="0.4" width="28.2" height="23.2" fill="#c9c9c9" stroke="#161616" stroke-width="0.8"/>
<g fill="#0e0e0e"><rect x="2.1" y="2.1" width="1.6" height="3.1" rx="0.6"/><rect x="2.1" y="8.3" width="1.6" height="3.1" rx="0.6"/><rect x="2.1" y="14" width="1.6" height="2.9" rx="0.6"/><rect x="2.1" y="20.2" width="1.6" height="3.4" rx="0.6"/>
<rect x="25.1" y="2.1" width="1.6" height="3.1" rx="0.6"/><rect x="25.1" y="8.3" width="1.6" height="3.1" rx="0.6"/><rect x="25.1" y="14" width="1.6" height="2.9" rx="0.6"/><rect x="25.1" y="20.2" width="1.6" height="3.4" rx="0.6"/>
<rect x="5.8" y="20.1" width="16.8" height="1.3"/></g>
<rect x="14.9" y="8.7" width="6.5" height="6.8" fill="#ff3b3b" stroke="#0c0c0c" stroke-width="1.25"/>
<circle cx="10.9" cy="9.3" r="3.4" fill="#3398fb" stroke="#0c0c0c" stroke-width="1.25"/>
<path d="M8.6 17.4 L13.5 11.4 L19 17.4Z" fill="#1db51d" stroke="#0c0c0c" stroke-width="1.25"/></svg>
<span class="t" id="t106" style="left:271.5px;top:1043.0px;font-size:19px;line-height:25px;color:#a8a8a8;font-weight:700;letter-spacing:-0.319px;">[Paragraph 3]</span>
<div style="left:465.5px;top:1044.2px;width:119.5px;height:22.5px;background:#1f1f1f;"></div>
<span class="t" id="t107" style="left:476.5px;top:1043.8px;font-size:19.5px;line-height:25px;color:#d4d4d4;letter-spacing:0.119px;">Normal</span>
<svg style="left:563.5px;top:1051.0px;" width="13" height="8" viewBox="0 0 13 8"><path d="M1 1 L6.5 6.6 L12 1" fill="none" stroke="#c8c8c8" stroke-width="1.8"/></svg>
<div style="left:594px;top:1044.2px;width:22.5px;height:22.5px;background:#1f1f1f;"></div>
<div style="left:627px;top:1044.2px;width:112.5px;height:22.5px;background:#1f1f1f;"></div>
<span class="t" id="t108" style="left:638px;top:1043.8px;font-size:19.5px;line-height:25px;color:#d4d4d4;letter-spacing:-0.464px;">None</span>
<svg style="left:717.5px;top:1051.0px;" width="13" height="8" viewBox="0 0 13 8"><path d="M1 1 L6.5 6.6 L12 1" fill="none" stroke="#c8c8c8" stroke-width="1.8"/></svg>
<svg style="left:756px;top:1044.8px;" width="22" height="20" viewBox="0 0 22 20"><path d="M20.20 2.30 C20.33 3.55 21.45 7.45 21.00 9.80 C20.55 12.15 19.25 14.97 17.50 16.40 C15.75 17.83 12.92 18.55 10.50 18.40 C8.08 18.25 4.55 16.93 3.00 15.50 C1.45 14.07 1.05 11.78 1.20 9.80 C1.35 7.82 2.35 5.03 3.90 3.60 C5.45 2.17 8.60 1.20 10.50 1.20 C12.40 1.20 14.35 2.32 15.30 3.60 C16.25 4.88 16.42 7.22 16.20 8.90 C15.98 10.58 15.03 12.75 14.00 13.70 C12.97 14.65 11.32 14.97 10.00 14.60 C8.68 14.23 6.53 12.60 6.10 11.50 C5.67 10.40 6.67 8.73 7.40 8.00 C8.13 7.27 9.72 6.88 10.50 7.10 C11.28 7.32 12.10 8.57 12.10 9.30 C12.10 10.03 10.77 11.13 10.50 11.50" fill="none" stroke="#b4b4b4" stroke-width="1.6" stroke-linecap="round"/></svg>
<div style="left:788.5px;top:1044.2px;width:154.5px;height:22.5px;background:#1f1f1f;"></div>
<span class="t" id="t109" style="left:800px;top:1043.8px;font-size:19.5px;line-height:25px;color:#d4d4d4;letter-spacing:-0.750px;">None</span>
<svg style="left:921px;top:1051.0px;" width="13" height="8" viewBox="0 0 13 8"><path d="M1 1 L6.5 6.6 L12 1" fill="none" stroke="#c8c8c8" stroke-width="1.8"/></svg>
<div style="left:4px;top:1072.5px;width:975px;height:29.7px;background:#2b2b2b;"></div>
<div style="left:4px;top:1100.0px;width:975px;height:1.4px;background:#232323;"></div>
<div style="left:11px;top:1073.7px;width:22.5px;height:21.5px;background:#1f1f1f;"></div>
<div style="left:63px;top:1073.7px;width:22.5px;height:21.5px;background:#1f1f1f;"></div>
<div style="left:89.3px;top:1073.7px;width:22.3px;height:21.5px;background:#1f1f1f;"></div>
<svg style="left:12.5px;top:1078.0px;" width="19" height="14" viewBox="0 0 19 14"><path d="M0.5 7 Q9.5 -3.2 18.5 7 Q9.5 16.8 0.5 7Z" fill="#c6c6c6"/><circle cx="9.5" cy="6.6" r="4" fill="#1f1f1f"/><circle cx="9.5" cy="6.6" r="2.3" fill="#c6c6c6"/><circle cx="10.6" cy="5.4" r="0.9" fill="#1f1f1f"/></svg>
<svg style="left:130px;top:1078.2px;" width="14" height="13" viewBox="0 0 14 13"><path d="M0.5 0.5 L13.5 6.5 L0.5 12.5Z" fill="#b4b4b4"/></svg>
<div style="left:151.5px;top:1074.9px;width:21px;height:20.6px;background:#b5a07d;border:0.7px solid rgba(0,0,0,0.35);"></div>
<span class="t" id="t110" style="left:188px;top:1072.5px;font-size:19px;line-height:25px;color:#a8a8a8;font-weight:700;letter-spacing:0.240px;">36</span>
<svg style="left:236.5px;top:1073.5px;" width="28" height="22.5" viewBox="0 0 29 24"><rect x="0.4" y="0.4" width="28.2" height="23.2" fill="#c9c9c9" stroke="#161616" stroke-width="0.8"/>
<g fill="#0e0e0e"><rect x="2.1" y="2.1" width="1.6" height="3.1" rx="0.6"/><rect x="2.1" y="8.3" width="1.6" height="3.1" rx="0.6"/><rect x="2.1" y="14" width="1.6" height="2.9" rx="0.6"/><rect x="2.1" y="20.2" width="1.6" height="3.4" rx="0.6"/>
<rect x="25.1" y="2.1" width="1.6" height="3.1" rx="0.6"/><rect x="25.1" y="8.3" width="1.6" height="3.1" rx="0.6"/><rect x="25.1" y="14" width="1.6" height="2.9" rx="0.6"/><rect x="25.1" y="20.2" width="1.6" height="3.4" rx="0.6"/>
<rect x="5.8" y="20.1" width="16.8" height="1.3"/></g>
<rect x="14.9" y="8.7" width="6.5" height="6.8" fill="#ff3b3b" stroke="#0c0c0c" stroke-width="1.25"/>
<circle cx="10.9" cy="9.3" r="3.4" fill="#3398fb" stroke="#0c0c0c" stroke-width="1.25"/>
<path d="M8.6 17.4 L13.5 11.4 L19 17.4Z" fill="#1db51d" stroke="#0c0c0c" stroke-width="1.25"/></svg>
<span class="t" id="t111" style="left:271.5px;top:1072.5px;font-size:19px;line-height:25px;color:#a8a8a8;font-weight:700;letter-spacing:-0.319px;">[Paragraph 2]</span>
<div style="left:465.5px;top:1073.7px;width:119.5px;height:22.5px;background:#1f1f1f;"></div>
<span class="t" id="t112" style="left:476.5px;top:1073.3px;font-size:19.5px;line-height:25px;color:#d4d4d4;letter-spacing:0.119px;">Normal</span>
<svg style="left:563.5px;top:1080.5px;" width="13" height="8" viewBox="0 0 13 8"><path d="M1 1 L6.5 6.6 L12 1" fill="none" stroke="#c8c8c8" stroke-width="1.8"/></svg>
<div style="left:594px;top:1073.7px;width:22.5px;height:22.5px;background:#1f1f1f;"></div>
<div style="left:627px;top:1073.7px;width:112.5px;height:22.5px;background:#1f1f1f;"></div>
<span class="t" id="t113" style="left:638px;top:1073.3px;font-size:19.5px;line-height:25px;color:#d4d4d4;letter-spacing:-0.464px;">None</span>
<svg style="left:717.5px;top:1080.5px;" width="13" height="8" viewBox="0 0 13 8"><path d="M1 1 L6.5 6.6 L12 1" fill="none" stroke="#c8c8c8" stroke-width="1.8"/></svg>
<svg style="left:756px;top:1074.3px;" width="22" height="20" viewBox="0 0 22 20"><path d="M20.20 2.30 C20.33 3.55 21.45 7.45 21.00 9.80 C20.55 12.15 19.25 14.97 17.50 16.40 C15.75 17.83 12.92 18.55 10.50 18.40 C8.08 18.25 4.55 16.93 3.00 15.50 C1.45 14.07 1.05 11.78 1.20 9.80 C1.35 7.82 2.35 5.03 3.90 3.60 C5.45 2.17 8.60 1.20 10.50 1.20 C12.40 1.20 14.35 2.32 15.30 3.60 C16.25 4.88 16.42 7.22 16.20 8.90 C15.98 10.58 15.03 12.75 14.00 13.70 C12.97 14.65 11.32 14.97 10.00 14.60 C8.68 14.23 6.53 12.60 6.10 11.50 C5.67 10.40 6.67 8.73 7.40 8.00 C8.13 7.27 9.72 6.88 10.50 7.10 C11.28 7.32 12.10 8.57 12.10 9.30 C12.10 10.03 10.77 11.13 10.50 11.50" fill="none" stroke="#b4b4b4" stroke-width="1.6" stroke-linecap="round"/></svg>
<div style="left:788.5px;top:1073.7px;width:154.5px;height:22.5px;background:#1f1f1f;"></div>
<span class="t" id="t114" style="left:800px;top:1073.3px;font-size:19.5px;line-height:25px;color:#d4d4d4;letter-spacing:-0.750px;">None</span>
<svg style="left:921px;top:1080.5px;" width="13" height="8" viewBox="0 0 13 8"><path d="M1 1 L6.5 6.6 L12 1" fill="none" stroke="#c8c8c8" stroke-width="1.8"/></svg>
<div style="left:4px;top:1102.0px;width:975px;height:29.7px;background:#2b2b2b;"></div>
<div style="left:4px;top:1129.5px;width:975px;height:1.4px;background:#232323;"></div>
<div style="left:11px;top:1103.2px;width:22.5px;height:21.5px;background:#1f1f1f;"></div>
<div style="left:63px;top:1103.2px;width:22.5px;height:21.5px;background:#1f1f1f;"></div>
<div style="left:89.3px;top:1103.2px;width:22.3px;height:21.5px;background:#1f1f1f;"></div>
<svg style="left:12.5px;top:1107.5px;" width="19" height="14" viewBox="0 0 19 14"><path d="M0.5 7 Q9.5 -3.2 18.5 7 Q9.5 16.8 0.5 7Z" fill="#c6c6c6"/><circle cx="9.5" cy="6.6" r="4" fill="#1f1f1f"/><circle cx="9.5" cy="6.6" r="2.3" fill="#c6c6c6"/><circle cx="10.6" cy="5.4" r="0.9" fill="#1f1f1f"/></svg>
<svg style="left:130px;top:1107.7px;" width="14" height="13" viewBox="0 0 14 13"><path d="M0.5 0.5 L13.5 6.5 L0.5 12.5Z" fill="#b4b4b4"/></svg>
<div style="left:151.5px;top:1104.4px;width:21px;height:20.6px;background:#b5a07d;border:0.7px solid rgba(0,0,0,0.35);"></div>
<span class="t" id="t115" style="left:188px;top:1102.0px;font-size:19px;line-height:25px;color:#a8a8a8;font-weight:700;letter-spacing:0.240px;">37</span>
<svg style="left:236.5px;top:1103.0px;" width="28" height="22.5" viewBox="0 0 29 24"><rect x="0.4" y="0.4" width="28.2" height="23.2" fill="#c9c9c9" stroke="#161616" stroke-width="0.8"/>
<g fill="#0e0e0e"><rect x="2.1" y="2.1" width="1.6" height="3.1" rx="0.6"/><rect x="2.1" y="8.3" width="1.6" height="3.1" rx="0.6"/><rect x="2.1" y="14" width="1.6" height="2.9" rx="0.6"/><rect x="2.1" y="20.2" width="1.6" height="3.4" rx="0.6"/>
<rect x="25.1" y="2.1" width="1.6" height="3.1" rx="0.6"/><rect x="25.1" y="8.3" width="1.6" height="3.1" rx="0.6"/><rect x="25.1" y="14" width="1.6" height="2.9" rx="0.6"/><rect x="25.1" y="20.2" width="1.6" height="3.4" rx="0.6"/>
<rect x="5.8" y="20.1" width="16.8" height="1.3"/></g>
<rect x="14.9" y="8.7" width="6.5" height="6.8" fill="#ff3b3b" stroke="#0c0c0c" stroke-width="1.25"/>
<circle cx="10.9" cy="9.3" r="3.4" fill="#3398fb" stroke="#0c0c0c" stroke-width="1.25"/>
<path d="M8.6 17.4 L13.5 11.4 L19 17.4Z" fill="#1db51d" stroke="#0c0c0c" stroke-width="1.25"/></svg>
<span class="t" id="t116" style="left:271.5px;top:1102.0px;font-size:19px;line-height:25px;color:#a8a8a8;font-weight:700;letter-spacing:-0.319px;">[Paragraph 1]</span>
<div style="left:465.5px;top:1103.2px;width:119.5px;height:22.5px;background:#1f1f1f;"></div>
<span class="t" id="t117" style="left:476.5px;top:1102.8px;font-size:19.5px;line-height:25px;color:#d4d4d4;letter-spacing:0.119px;">Normal</span>
<svg style="left:563.5px;top:1110.0px;" width="13" height="8" viewBox="0 0 13 8"><path d="M1 1 L6.5 6.6 L12 1" fill="none" stroke="#c8c8c8" stroke-width="1.8"/></svg>
<div style="left:594px;top:1103.2px;width:22.5px;height:22.5px;background:#1f1f1f;"></div>
<div style="left:627px;top:1103.2px;width:112.5px;height:22.5px;background:#1f1f1f;"></div>
<span class="t" id="t118" style="left:638px;top:1102.8px;font-size:19.5px;line-height:25px;color:#d4d4d4;letter-spacing:-0.464px;">None</span>
<svg style="left:717.5px;top:1110.0px;" width="13" height="8" viewBox="0 0 13 8"><path d="M1 1 L6.5 6.6 L12 1" fill="none" stroke="#c8c8c8" stroke-width="1.8"/></svg>
<svg style="left:756px;top:1103.8px;" width="22" height="20" viewBox="0 0 22 20"><path d="M20.20 2.30 C20.33 3.55 21.45 7.45 21.00 9.80 C20.55 12.15 19.25 14.97 17.50 16.40 C15.75 17.83 12.92 18.55 10.50 18.40 C8.08 18.25 4.55 16.93 3.00 15.50 C1.45 14.07 1.05 11.78 1.20 9.80 C1.35 7.82 2.35 5.03 3.90 3.60 C5.45 2.17 8.60 1.20 10.50 1.20 C12.40 1.20 14.35 2.32 15.30 3.60 C16.25 4.88 16.42 7.22 16.20 8.90 C15.98 10.58 15.03 12.75 14.00 13.70 C12.97 14.65 11.32 14.97 10.00 14.60 C8.68 14.23 6.53 12.60 6.10 11.50 C5.67 10.40 6.67 8.73 7.40 8.00 C8.13 7.27 9.72 6.88 10.50 7.10 C11.28 7.32 12.10 8.57 12.10 9.30 C12.10 10.03 10.77 11.13 10.50 11.50" fill="none" stroke="#b4b4b4" stroke-width="1.6" stroke-linecap="round"/></svg>
<div style="left:788.5px;top:1103.2px;width:154.5px;height:22.5px;background:#1f1f1f;"></div>
<span class="t" id="t119" style="left:800px;top:1102.8px;font-size:19.5px;line-height:25px;color:#d4d4d4;letter-spacing:-0.750px;">None</span>
<svg style="left:921px;top:1110.0px;" width="13" height="8" viewBox="0 0 13 8"><path d="M1 1 L6.5 6.6 L12 1" fill="none" stroke="#c8c8c8" stroke-width="1.8"/></svg>
<div style="left:4px;top:1131.5px;width:975px;height:29.7px;background:#2b2b2b;"></div>
<div style="left:4px;top:1159.0px;width:975px;height:1.4px;background:#232323;"></div>
<div style="left:11px;top:1132.7px;width:22.5px;height:21.5px;background:#1f1f1f;"></div>
<div style="left:63px;top:1132.7px;width:22.5px;height:21.5px;background:#1f1f1f;"></div>
<div style="left:89.3px;top:1132.7px;width:22.3px;height:21.5px;background:#1f1f1f;"></div>
<svg style="left:12.5px;top:1137.0px;" width="19" height="14" viewBox="0 0 19 14"><path d="M0.5 7 Q9.5 -3.2 18.5 7 Q9.5 16.8 0.5 7Z" fill="#c6c6c6"/><circle cx="9.5" cy="6.6" r="4" fill="#1f1f1f"/><circle cx="9.5" cy="6.6" r="2.3" fill="#c6c6c6"/><circle cx="10.6" cy="5.4" r="0.9" fill="#1f1f1f"/></svg>
<svg style="left:130px;top:1137.2px;" width="14" height="13" viewBox="0 0 14 13"><path d="M0.5 0.5 L13.5 6.5 L0.5 12.5Z" fill="#b4b4b4"/></svg>
<div style="left:151.5px;top:1133.9px;width:21px;height:20.6px;background:#c0383a;border:0.7px solid rgba(0,0,0,0.35);"></div>
<span class="t" id="t120" style="left:188px;top:1131.5px;font-size:19px;line-height:25px;color:#a8a8a8;font-weight:700;letter-spacing:0.240px;">38</span>
<span style="left:241.5px;top:1129.6000000000001px;font-family:'Liberation Serif',serif;font-size:23.3px;line-height:26px;color:#bcbcbc;-webkit-text-stroke:0.5px;">T</span>
<span class="t" id="t121" style="left:271.5px;top:1131.5px;font-size:19px;line-height:25px;color:#a8a8a8;font-weight:700;letter-spacing:-0.355px;">must be balanced</span>
<div style="left:465.5px;top:1132.7px;width:119.5px;height:22.5px;background:#1f1f1f;"></div>
<span class="t" id="t122" style="left:476.5px;top:1132.3px;font-size:19.5px;line-height:25px;color:#d4d4d4;letter-spacing:0.119px;">Normal</span>
<svg style="left:563.5px;top:1139.5px;" width="13" height="8" viewBox="0 0 13 8"><path d="M1 1 L6.5 6.6 L12 1" fill="none" stroke="#c8c8c8" stroke-width="1.8"/></svg>
<div style="left:594px;top:1132.7px;width:22.5px;height:22.5px;background:#1f1f1f;"></div>
<div style="left:627px;top:1132.7px;width:112.5px;height:22.5px;background:#1f1f1f;"></div>
<span class="t" id="t123" style="left:638px;top:1132.3px;font-size:19.5px;line-height:25px;color:#d4d4d4;letter-spacing:-0.464px;">None</span>
<svg style="left:717.5px;top:1139.5px;" width="13" height="8" viewBox="0 0 13 8"><path d="M1 1 L6.5 6.6 L12 1" fill="none" stroke="#c8c8c8" stroke-width="1.8"/></svg>
<svg style="left:756px;top:1133.3px;" width="22" height="20" viewBox="0 0 22 20"><path d="M20.20 2.30 C20.33 3.55 21.45 7.45 21.00 9.80 C20.55 12.15 19.25 14.97 17.50 16.40 C15.75 17.83 12.92 18.55 10.50 18.40 C8.08 18.25 4.55 16.93 3.00 15.50 C1.45 14.07 1.05 11.78 1.20 9.80 C1.35 7.82 2.35 5.03 3.90 3.60 C5.45 2.17 8.60 1.20 10.50 1.20 C12.40 1.20 14.35 2.32 15.30 3.60 C16.25 4.88 16.42 7.22 16.20 8.90 C15.98 10.58 15.03 12.75 14.00 13.70 C12.97 14.65 11.32 14.97 10.00 14.60 C8.68 14.23 6.53 12.60 6.10 11.50 C5.67 10.40 6.67 8.73 7.40 8.00 C8.13 7.27 9.72 6.88 10.50 7.10 C11.28 7.32 12.10 8.57 12.10 9.30 C12.10 10.03 10.77 11.13 10.50 11.50" fill="none" stroke="#b4b4b4" stroke-width="1.6" stroke-linecap="round"/></svg>
<div style="left:788.5px;top:1132.7px;width:154.5px;height:22.5px;background:#1f1f1f;"></div>
<span class="t" id="t124" style="left:800px;top:1132.3px;font-size:19.5px;line-height:25px;color:#d4d4d4;letter-spacing:-0.750px;">None</span>
<svg style="left:921px;top:1139.5px;" width="13" height="8" viewBox="0 0 13 8"><path d="M1 1 L6.5 6.6 L12 1" fill="none" stroke="#c8c8c8" stroke-width="1.8"/></svg>
<div style="left:4px;top:1161.0px;width:975px;height:29.7px;background:#2b2b2b;"></div>
<div style="left:4px;top:1188.5px;width:975px;height:1.4px;background:#232323;"></div>
<div style="left:11px;top:1162.2px;width:22.5px;height:21.5px;background:#1f1f1f;"></div>
<div style="left:63px;top:1162.2px;width:22.5px;height:21.5px;background:#1f1f1f;"></div>
<div style="left:89.3px;top:1162.2px;width:22.3px;height:21.5px;background:#1f1f1f;"></div>
<svg style="left:12.5px;top:1166.5px;" width="19" height="14" viewBox="0 0 19 14"><path d="M0.5 7 Q9.5 -3.2 18.5 7 Q9.5 16.8 0.5 7Z" fill="#c6c6c6"/><circle cx="9.5" cy="6.6" r="4" fill="#1f1f1f"/><circle cx="9.5" cy="6.6" r="2.3" fill="#c6c6c6"/><circle cx="10.6" cy="5.4" r="0.9" fill="#1f1f1f"/></svg>
<svg style="left:130px;top:1166.7px;" width="14" height="13" viewBox="0 0 14 13"><path d="M0.5 0.5 L13.5 6.5 L0.5 12.5Z" fill="#b4b4b4"/></svg>
<div style="left:151.5px;top:1163.4px;width:21px;height:20.6px;background:#c0383a;border:0.7px solid rgba(0,0,0,0.35);"></div>
<span class="t" id="t125" style="left:188px;top:1161.0px;font-size:19px;line-height:25px;color:#a8a8a8;font-weight:700;letter-spacing:0.240px;">39</span>
<span style="left:241.5px;top:1159.1000000000001px;font-family:'Liberation Serif',serif;font-size:23.3px;line-height:26px;color:#bcbcbc;-webkit-text-stroke:0.5px;">T</span>
<span class="t" id="t126" style="left:271.5px;top:1161.0px;font-size:19px;line-height:25px;color:#a8a8a8;font-weight:700;letter-spacing:-0.448px;">A capac...to feel joy</span>
<div style="left:465.5px;top:1162.2px;width:119.5px;height:22.5px;background:#1f1f1f;"></div>
<span class="t" id="t127" style="left:476.5px;top:1161.8px;font-size:19.5px;line-height:25px;color:#d4d4d4;letter-spacing:0.119px;">Normal</span>
<svg style="left:563.5px;top:1169.0px;" width="13" height="8" viewBox="0 0 13 8"><path d="M1 1 L6.5 6.6 L12 1" fill="none" stroke="#c8c8c8" stroke-width="1.8"/></svg>
<div style="left:594px;top:1162.2px;width:22.5px;height:22.5px;background:#1f1f1f;"></div>
<div style="left:627px;top:1162.2px;width:112.5px;height:22.5px;background:#1f1f1f;"></div>
<span class="t" id="t128" style="left:638px;top:1161.8px;font-size:19.5px;line-height:25px;color:#d4d4d4;letter-spacing:-0.464px;">None</span>
<svg style="left:717.5px;top:1169.0px;" width="13" height="8" viewBox="0 0 13 8"><path d="M1 1 L6.5 6.6 L12 1" fill="none" stroke="#c8c8c8" stroke-width="1.8"/></svg>
<svg style="left:756px;top:1162.8px;" width="22" height="20" viewBox="0 0 22 20"><path d="M20.20 2.30 C20.33 3.55 21.45 7.45 21.00 9.80 C20.55 12.15 19.25 14.97 17.50 16.40 C15.75 17.83 12.92 18.55 10.50 18.40 C8.08 18.25 4.55 16.93 3.00 15.50 C1.45 14.07 1.05 11.78 1.20 9.80 C1.35 7.82 2.35 5.03 3.90 3.60 C5.45 2.17 8.60 1.20 10.50 1.20 C12.40 1.20 14.35 2.32 15.30 3.60 C16.25 4.88 16.42 7.22 16.20 8.90 C15.98 10.58 15.03 12.75 14.00 13.70 C12.97 14.65 11.32 14.97 10.00 14.60 C8.68 14.23 6.53 12.60 6.10 11.50 C5.67 10.40 6.67 8.73 7.40 8.00 C8.13 7.27 9.72 6.88 10.50 7.10 C11.28 7.32 12.10 8.57 12.10 9.30 C12.10 10.03 10.77 11.13 10.50 11.50" fill="none" stroke="#b4b4b4" stroke-width="1.6" stroke-linecap="round"/></svg>
<div style="left:788.5px;top:1162.2px;width:154.5px;height:22.5px;background:#1f1f1f;"></div>
<span class="t" id="t129" style="left:800px;top:1161.8px;font-size:19.5px;line-height:25px;color:#d4d4d4;letter-spacing:-0.750px;">None</span>
<svg style="left:921px;top:1169.0px;" width="13" height="8" viewBox="0 0 13 8"><path d="M1 1 L6.5 6.6 L12 1" fill="none" stroke="#c8c8c8" stroke-width="1.8"/></svg>
<div style="left:4px;top:1190.5px;width:975px;height:29.7px;background:#2b2b2b;"></div>
<div style="left:4px;top:1218.0px;width:975px;height:1.4px;background:#232323;"></div>
<div style="left:11px;top:1191.7px;width:22.5px;height:21.5px;background:#1f1f1f;"></div>
<div style="left:63px;top:1191.7px;width:22.5px;height:21.5px;background:#1f1f1f;"></div>
<div style="left:89.3px;top:1191.7px;width:22.3px;height:21.5px;background:#1f1f1f;"></div>
<svg style="left:12.5px;top:1196.0px;" width="19" height="14" viewBox="0 0 19 14"><path d="M0.5 7 Q9.5 -3.2 18.5 7 Q9.5 16.8 0.5 7Z" fill="#c6c6c6"/><circle cx="9.5" cy="6.6" r="4" fill="#1f1f1f"/><circle cx="9.5" cy="6.6" r="2.3" fill="#c6c6c6"/><circle cx="10.6" cy="5.4" r="0.9" fill="#1f1f1f"/></svg>
<svg style="left:130px;top:1196.2px;" width="14" height="13" viewBox="0 0 14 13"><path d="M0.5 0.5 L13.5 6.5 L0.5 12.5Z" fill="#b4b4b4"/></svg>
<div style="left:151.5px;top:1192.9px;width:21px;height:20.6px;background:#c0383a;border:0.7px solid rgba(0,0,0,0.35);"></div>
<span class="t" id="t130" style="left:188px;top:1190.5px;font-size:19px;line-height:25px;color:#a8a8a8;font-weight:700;letter-spacing:0.240px;">40</span>
<div style="left:238.5px;top:1191.1000000000001px;width:23.7px;height:23.6px;background:#ffffff;border:1.5px solid #0a0a0a;"></div>
<span class="t" id="t131" style="left:271.5px;top:1190.5px;font-size:19px;line-height:25px;color:#a8a8a8;font-weight:700;letter-spacing:-0.277px;">camera control</span>
<div style="left:465.5px;top:1191.7px;width:119.5px;height:22.5px;background:#1f1f1f;"></div>
<span class="t" id="t132" style="left:476.5px;top:1191.3px;font-size:19.5px;line-height:25px;color:#d4d4d4;letter-spacing:0.119px;">Normal</span>
<svg style="left:563.5px;top:1198.5px;" width="13" height="8" viewBox="0 0 13 8"><path d="M1 1 L6.5 6.6 L12 1" fill="none" stroke="#c8c8c8" stroke-width="1.8"/></svg>
<div style="left:594px;top:1191.7px;width:22.5px;height:22.5px;background:#1f1f1f;"></div>
<div style="left:627px;top:1191.7px;width:112.5px;height:22.5px;background:#1f1f1f;"></div>
<span class="t" id="t133" style="left:638px;top:1191.3px;font-size:19.5px;line-height:25px;color:#d4d4d4;letter-spacing:-0.464px;">None</span>
<svg style="left:717.5px;top:1198.5px;" width="13" height="8" viewBox="0 0 13 8"><path d="M1 1 L6.5 6.6 L12 1" fill="none" stroke="#c8c8c8" stroke-width="1.8"/></svg>
<svg style="left:756px;top:1192.3px;" width="22" height="20" viewBox="0 0 22 20"><path d="M20.20 2.30 C20.33 3.55 21.45 7.45 21.00 9.80 C20.55 12.15 19.25 14.97 17.50 16.40 C15.75 17.83 12.92 18.55 10.50 18.40 C8.08 18.25 4.55 16.93 3.00 15.50 C1.45 14.07 1.05 11.78 1.20 9.80 C1.35 7.82 2.35 5.03 3.90 3.60 C5.45 2.17 8.60 1.20 10.50 1.20 C12.40 1.20 14.35 2.32 15.30 3.60 C16.25 4.88 16.42 7.22 16.20 8.90 C15.98 10.58 15.03 12.75 14.00 13.70 C12.97 14.65 11.32 14.97 10.00 14.60 C8.68 14.23 6.53 12.60 6.10 11.50 C5.67 10.40 6.67 8.73 7.40 8.00 C8.13 7.27 9.72 6.88 10.50 7.10 C11.28 7.32 12.10 8.57 12.10 9.30 C12.10 10.03 10.77 11.13 10.50 11.50" fill="none" stroke="#b4b4b4" stroke-width="1.6" stroke-linecap="round"/></svg>
<div style="left:788.5px;top:1191.7px;width:154.5px;height:22.5px;background:#1f1f1f;"></div>
<span class="t" id="t134" style="left:800px;top:1191.3px;font-size:19.5px;line-height:25px;color:#d4d4d4;letter-spacing:-0.750px;">None</span>
<svg style="left:921px;top:1198.5px;" width="13" height="8" viewBox="0 0 13 8"><path d="M1 1 L6.5 6.6 L12 1" fill="none" stroke="#c8c8c8" stroke-width="1.8"/></svg>
<div style="left:4px;top:1220.0px;width:975px;height:29.7px;background:#2b2b2b;"></div>
<div style="left:4px;top:1247.5px;width:975px;height:1.4px;background:#232323;"></div>
<div style="left:11px;top:1221.2px;width:22.5px;height:21.5px;background:#1f1f1f;"></div>
<div style="left:63px;top:1221.2px;width:22.5px;height:21.5px;background:#1f1f1f;"></div>
<div style="left:89.3px;top:1221.2px;width:22.3px;height:21.5px;background:#1f1f1f;"></div>
<svg style="left:12.5px;top:1225.5px;" width="19" height="14" viewBox="0 0 19 14"><path d="M0.5 7 Q9.5 -3.2 18.5 7 Q9.5 16.8 0.5 7Z" fill="#c6c6c6"/><circle cx="9.5" cy="6.6" r="4" fill="#1f1f1f"/><circle cx="9.5" cy="6.6" r="2.3" fill="#c6c6c6"/><circle cx="10.6" cy="5.4" r="0.9" fill="#1f1f1f"/></svg>
<svg style="left:130px;top:1225.7px;" width="14" height="13" viewBox="0 0 14 13"><path d="M0.5 0.5 L13.5 6.5 L0.5 12.5Z" fill="#b4b4b4"/></svg>
<div style="left:151.5px;top:1222.4px;width:21px;height:20.6px;background:#eab9cb;border:0.7px solid rgba(0,0,0,0.35);"></div>
<span class="t" id="t135" style="left:188px;top:1220.0px;font-size:19px;line-height:25px;color:#a8a8a8;font-weight:700;letter-spacing:0.240px;">41</span>
<svg style="left:238px;top:1224.2px;" width="22" height="15" viewBox="0 0 22 15"><rect x="0.5" y="0.5" width="13" height="13.5" rx="2.5" fill="#b4b4b4"/><path d="M12.5 5.5 L15.5 5.5 L21 1.5 L21 13 L15.5 9 L12.5 9Z" fill="#b4b4b4"/></svg>
<span class="t" id="t136" style="left:271.5px;top:1220.0px;font-size:19px;line-height:25px;color:#a8a8a8;font-weight:700;letter-spacing:-0.408px;">Camera 1</span>
<svg style="left:756px;top:1221.8px;" width="22" height="20" viewBox="0 0 22 20"><path d="M20.20 2.30 C20.33 3.55 21.45 7.45 21.00 9.80 C20.55 12.15 19.25 14.97 17.50 16.40 C15.75 17.83 12.92 18.55 10.50 18.40 C8.08 18.25 4.55 16.93 3.00 15.50 C1.45 14.07 1.05 11.78 1.20 9.80 C1.35 7.82 2.35 5.03 3.90 3.60 C5.45 2.17 8.60 1.20 10.50 1.20 C12.40 1.20 14.35 2.32 15.30 3.60 C16.25 4.88 16.42 7.22 16.20 8.90 C15.98 10.58 15.03 12.75 14.00 13.70 C12.97 14.65 11.32 14.97 10.00 14.60 C8.68 14.23 6.53 12.60 6.10 11.50 C5.67 10.40 6.67 8.73 7.40 8.00 C8.13 7.27 9.72 6.88 10.50 7.10 C11.28 7.32 12.10 8.57 12.10 9.30 C12.10 10.03 10.77 11.13 10.50 11.50" fill="none" stroke="#b4b4b4" stroke-width="1.6" stroke-linecap="round"/></svg>
<div style="left:788.5px;top:1221.2px;width:154.5px;height:22.5px;background:#1f1f1f;"></div>
<span class="t" id="t137" style="left:800px;top:1220.8px;font-size:19.5px;line-height:25px;color:#d4d4d4;letter-spacing:-0.645px;">40. camera co</span>
<svg style="left:921px;top:1228.0px;" width="13" height="8" viewBox="0 0 13 8"><path d="M1 1 L6.5 6.6 L12 1" fill="none" stroke="#c8c8c8" stroke-width="1.8"/></svg>
<div style="left:4px;top:1249.5px;width:975px;height:29.7px;background:#2b2b2b;"></div>
<div style="left:4px;top:1277.0px;width:975px;height:1.4px;background:#232323;"></div>
<div style="left:37px;top:1250.7px;width:22.5px;height:21.5px;background:#1f1f1f;"></div>
<div style="left:63px;top:1250.7px;width:22.5px;height:21.5px;background:#1f1f1f;"></div>
<div style="left:89.3px;top:1250.7px;width:22.3px;height:21.5px;background:#1f1f1f;"></div>
<svg style="left:38px;top:1251.2px;" width="21" height="21" viewBox="0 0 21 21"><path d="M0.5 6 L4 6 L9.2 0.8 L9.2 20.2 L4 15 L0.5 15Z" fill="#c6c6c6"/><path d="M12 6.3 Q16 10.5 12 14.7 M12.5 1.8 Q21.5 10.5 12.5 19.2" fill="none" stroke="#c6c6c6" stroke-width="1.6"/></svg>
<svg style="left:130px;top:1255.2px;" width="14" height="13" viewBox="0 0 14 13"><path d="M0.5 0.5 L13.5 6.5 L0.5 12.5Z" fill="#b4b4b4"/></svg>
<div style="left:151.5px;top:1251.9px;width:21px;height:20.6px;background:#b4d0b7;border:0.7px solid rgba(0,0,0,0.35);"></div>
<span class="t" id="t138" style="left:188px;top:1249.5px;font-size:19px;line-height:25px;color:#a8a8a8;font-weight:700;letter-spacing:0.240px;">42</span>
<svg style="left:241.5px;top:1250.2px;" width="17" height="22" viewBox="0 0 20 26"><path d="M0.5 0.5 L13 0.5 L19.5 7 L19.5 25.5 L0.5 25.5Z" fill="#fbfbfb" stroke="#cfcfcf" stroke-width="0.6"/>
<path d="M13 0.5 L13 7 L19.5 7Z" fill="#dcdcdc"/>
<circle cx="9.6" cy="12" r="6" fill="#fff" stroke="#e0569b" stroke-width="1.1"/>
<circle cx="9.6" cy="12" r="4.6" fill="none" stroke="#6fb6ee" stroke-width="0.7"/>
<path d="M8.2 14.5 L8.2 9.6 L12 8.8 L12 13.6" fill="none" stroke="#c94bb0" stroke-width="1"/>
<circle cx="7.4" cy="14.6" r="1.1" fill="#c94bb0"/><circle cx="11.2" cy="13.8" r="1.1" fill="#c94bb0"/>
<text x="10" y="23.6" font-family="Liberation Sans" font-size="5.6" font-weight="700" fill="#333" text-anchor="middle">MP3</text></svg>
<span class="t" id="t139" style="left:271.5px;top:1249.5px;font-size:19px;line-height:25px;color:#a8a8a8;font-weight:700;letter-spacing:-0.371px;">[Master... Sana.mp3]</span>
<svg style="left:756px;top:1251.3px;" width="22" height="20" viewBox="0 0 22 20"><path d="M20.20 2.30 C20.33 3.55 21.45 7.45 21.00 9.80 C20.55 12.15 19.25 14.97 17.50 16.40 C15.75 17.83 12.92 18.55 10.50 18.40 C8.08 18.25 4.55 16.93 3.00 15.50 C1.45 14.07 1.05 11.78 1.20 9.80 C1.35 7.82 2.35 5.03 3.90 3.60 C5.45 2.17 8.60 1.20 10.50 1.20 C12.40 1.20 14.35 2.32 15.30 3.60 C16.25 4.88 16.42 7.22 16.20 8.90 C15.98 10.58 15.03 12.75 14.00 13.70 C12.97 14.65 11.32 14.97 10.00 14.60 C8.68 14.23 6.53 12.60 6.10 11.50 C5.67 10.40 6.67 8.73 7.40 8.00 C8.13 7.27 9.72 6.88 10.50 7.10 C11.28 7.32 12.10 8.57 12.10 9.30 C12.10 10.03 10.77 11.13 10.50 11.50" fill="none" stroke="#b4b4b4" stroke-width="1.6" stroke-linecap="round"/></svg>
<div style="left:788.5px;top:1250.7px;width:154.5px;height:22.5px;background:#1f1f1f;"></div>
<span class="t" id="t140" style="left:800px;top:1250.3px;font-size:19.5px;line-height:25px;color:#d4d4d4;letter-spacing:-0.750px;">None</span>
<svg style="left:921px;top:1257.5px;" width="13" height="8" viewBox="0 0 13 8"><path d="M1 1 L6.5 6.6 L12 1" fill="none" stroke="#c8c8c8" stroke-width="1.8"/></svg>
<div style="left:4px;top:1279.0px;width:975px;height:29.7px;background:#2b2b2b;"></div>
<div style="left:4px;top:1306.5px;width:975px;height:1.4px;background:#232323;"></div>
<div style="left:37px;top:1280.2px;width:22.5px;height:21.5px;background:#1f1f1f;"></div>
<div style="left:63px;top:1280.2px;width:22.5px;height:21.5px;background:#1f1f1f;"></div>
<div style="left:89.3px;top:1280.2px;width:22.3px;height:21.5px;background:#1f1f1f;"></div>
<svg style="left:38px;top:1280.7px;" width="21" height="21" viewBox="0 0 21 21"><path d="M0.5 6 L4 6 L9.2 0.8 L9.2 20.2 L4 15 L0.5 15Z" fill="#c6c6c6"/><path d="M12 6.3 Q16 10.5 12 14.7 M12.5 1.8 Q21.5 10.5 12.5 19.2" fill="none" stroke="#c6c6c6" stroke-width="1.6"/></svg>
<svg style="left:130px;top:1284.7px;" width="14" height="13" viewBox="0 0 14 13"><path d="M0.5 0.5 L13.5 6.5 L0.5 12.5Z" fill="#b4b4b4"/></svg>
<div style="left:151.5px;top:1281.4px;width:21px;height:20.6px;background:#b4d0b7;border:0.7px solid rgba(0,0,0,0.35);"></div>
<span class="t" id="t141" style="left:188px;top:1279.0px;font-size:19px;line-height:25px;color:#a8a8a8;font-weight:700;letter-spacing:0.240px;">43</span>
<svg style="left:241.5px;top:1279.7px;" width="17" height="22" viewBox="0 0 20 26"><path d="M0.5 0.5 L13 0.5 L19.5 7 L19.5 25.5 L0.5 25.5Z" fill="#fbfbfb" stroke="#cfcfcf" stroke-width="0.6"/>
<path d="M13 0.5 L13 7 L19.5 7Z" fill="#dcdcdc"/>
<circle cx="9.6" cy="12" r="6" fill="#fff" stroke="#e0569b" stroke-width="1.1"/>
<circle cx="9.6" cy="12" r="4.6" fill="none" stroke="#6fb6ee" stroke-width="0.7"/>
<path d="M8.2 14.5 L8.2 9.6 L12 8.8 L12 13.6" fill="none" stroke="#c94bb0" stroke-width="1"/>
<circle cx="7.4" cy="14.6" r="1.1" fill="#c94bb0"/><circle cx="11.2" cy="13.8" r="1.1" fill="#c94bb0"/>
<text x="10" y="23.6" font-family="Liberation Sans" font-size="5.6" font-weight="700" fill="#333" text-anchor="middle">MP3</text></svg>
<span class="t" id="t142" style="left:271.5px;top:1279.0px;font-size:19px;line-height:25px;color:#a8a8a8;font-weight:700;letter-spacing:-0.371px;">[Master... Sana.mp3]</span>
<svg style="left:756px;top:1280.8px;" width="22" height="20" viewBox="0 0 22 20"><path d="M20.20 2.30 C20.33 3.55 21.45 7.45 21.00 9.80 C20.55 12.15 19.25 14.97 17.50 16.40 C15.75 17.83 12.92 18.55 10.50 18.40 C8.08 18.25 4.55 16.93 3.00 15.50 C1.45 14.07 1.05 11.78 1.20 9.80 C1.35 7.82 2.35 5.03 3.90 3.60 C5.45 2.17 8.60 1.20 10.50 1.20 C12.40 1.20 14.35 2.32 15.30 3.60 C16.25 4.88 16.42 7.22 16.20 8.90 C15.98 10.58 15.03 12.75 14.00 13.70 C12.97 14.65 11.32 14.97 10.00 14.60 C8.68 14.23 6.53 12.60 6.10 11.50 C5.67 10.40 6.67 8.73 7.40 8.00 C8.13 7.27 9.72 6.88 10.50 7.10 C11.28 7.32 12.10 8.57 12.10 9.30 C12.10 10.03 10.77 11.13 10.50 11.50" fill="none" stroke="#b4b4b4" stroke-width="1.6" stroke-linecap="round"/></svg>
<div style="left:788.5px;top:1280.2px;width:154.5px;height:22.5px;background:#1f1f1f;"></div>
<span class="t" id="t143" style="left:800px;top:1279.8px;font-size:19.5px;line-height:25px;color:#d4d4d4;letter-spacing:-0.750px;">None</span>
<svg style="left:921px;top:1287.0px;" width="13" height="8" viewBox="0 0 13 8"><path d="M1 1 L6.5 6.6 L12 1" fill="none" stroke="#c8c8c8" stroke-width="1.8"/></svg>
<div style="left:4px;top:1308.5px;width:975px;height:29.7px;background:#2b2b2b;"></div>
<div style="left:4px;top:1336.0px;width:975px;height:1.4px;background:#232323;"></div>
<div style="left:11px;top:1309.7px;width:22.5px;height:21.5px;background:#1f1f1f;"></div>
<div style="left:63px;top:1309.7px;width:22.5px;height:21.5px;background:#1f1f1f;"></div>
<div style="left:89.3px;top:1309.7px;width:22.3px;height:21.5px;background:#1f1f1f;"></div>
<svg style="left:12.5px;top:1314.0px;" width="19" height="14" viewBox="0 0 19 14"><path d="M0.5 7 Q9.5 -3.2 18.5 7 Q9.5 16.8 0.5 7Z" fill="#c6c6c6"/><circle cx="9.5" cy="6.6" r="4" fill="#1f1f1f"/><circle cx="9.5" cy="6.6" r="2.3" fill="#c6c6c6"/><circle cx="10.6" cy="5.4" r="0.9" fill="#1f1f1f"/></svg>
<svg style="left:130px;top:1314.2px;" width="14" height="13" viewBox="0 0 14 13"><path d="M0.5 0.5 L13.5 6.5 L0.5 12.5Z" fill="#b4b4b4"/></svg>
<div style="left:151.5px;top:1310.9px;width:21px;height:20.6px;background:#c0383a;border:0.7px solid rgba(0,0,0,0.35);"></div>
<span class="t" id="t144" style="left:188px;top:1308.5px;font-size:19px;line-height:25px;color:#a8a8a8;font-weight:700;letter-spacing:0.240px;">44</span>
<div style="left:238.5px;top:1309.1000000000001px;width:23.7px;height:23.6px;background:#f6f0f1;border:1.5px solid #0a0a0a;"></div>
<span class="t" id="t145" style="left:271.5px;top:1308.5px;font-size:19px;line-height:25px;color:#a8a8a8;font-weight:700;letter-spacing:-0.759px;">[BG]</span>
<div style="left:465.5px;top:1309.7px;width:119.5px;height:22.5px;background:#1f1f1f;"></div>
<span class="t" id="t146" style="left:476.5px;top:1309.3px;font-size:19.5px;line-height:25px;color:#d4d4d4;letter-spacing:0.119px;">Normal</span>
<svg style="left:563.5px;top:1316.5px;" width="13" height="8" viewBox="0 0 13 8"><path d="M1 1 L6.5 6.6 L12 1" fill="none" stroke="#c8c8c8" stroke-width="1.8"/></svg>
<div style="left:594px;top:1309.7px;width:22.5px;height:22.5px;background:#1f1f1f;"></div>
<svg style="left:756px;top:1310.3px;" width="22" height="20" viewBox="0 0 22 20"><path d="M20.20 2.30 C20.33 3.55 21.45 7.45 21.00 9.80 C20.55 12.15 19.25 14.97 17.50 16.40 C15.75 17.83 12.92 18.55 10.50 18.40 C8.08 18.25 4.55 16.93 3.00 15.50 C1.45 14.07 1.05 11.78 1.20 9.80 C1.35 7.82 2.35 5.03 3.90 3.60 C5.45 2.17 8.60 1.20 10.50 1.20 C12.40 1.20 14.35 2.32 15.30 3.60 C16.25 4.88 16.42 7.22 16.20 8.90 C15.98 10.58 15.03 12.75 14.00 13.70 C12.97 14.65 11.32 14.97 10.00 14.60 C8.68 14.23 6.53 12.60 6.10 11.50 C5.67 10.40 6.67 8.73 7.40 8.00 C8.13 7.27 9.72 6.88 10.50 7.10 C11.28 7.32 12.10 8.57 12.10 9.30 C12.10 10.03 10.77 11.13 10.50 11.50" fill="none" stroke="#b4b4b4" stroke-width="1.6" stroke-linecap="round"/></svg>
<div style="left:788.5px;top:1309.7px;width:154.5px;height:22.5px;background:#1f1f1f;"></div>
<span class="t" id="t147" style="left:800px;top:1309.3px;font-size:19.5px;line-height:25px;color:#d4d4d4;letter-spacing:-0.750px;">None</span>
<svg style="left:921px;top:1316.5px;" width="13" height="8" viewBox="0 0 13 8"><path d="M1 1 L6.5 6.6 L12 1" fill="none" stroke="#c8c8c8" stroke-width="1.8"/></svg>
<div style="left:4px;top:1338px;width:975px;height:28px;background:#262626;"></div>
<div style="left:4px;top:1337px;width:975px;height:1.5px;background:#0c0c0c;"></div>
<svg style="left:13.5px;top:1342px;" width="20" height="21" viewBox="0 0 20 21"><g fill="none" stroke="#b4b4b4" stroke-width="1.5"><rect x="0.8" y="0.8" width="10" height="10"/><rect x="4.8" y="4.8" width="10" height="10" fill="#262626"/><rect x="8.8" y="8.8" width="10" height="10" fill="#262626"/></g><rect x="11.5" y="11.5" width="4.6" height="4.6" fill="#b4b4b4"/></svg>
<div style="left:41px;top:1340px;width:27.5px;height:26px;background:#1c1c1c;border-radius:3px;"></div>
<svg style="left:45px;top:1342px;" width="21" height="21" viewBox="0 0 21 21"><circle cx="7.5" cy="7.5" r="6.5" fill="none" stroke="#2d8ceb" stroke-width="1.7"/><rect x="8.5" y="8.5" width="11" height="11" rx="1.5" fill="none" stroke="#2d8ceb" stroke-width="1.7"/></svg>
<svg style="left:76px;top:1341px;" width="21" height="22" viewBox="0 0 21 22"><path d="M6.5 1.5 L14.5 1.5 L14.5 20.5 L6.5 20.5Z" fill="#6e6e6e"/><path d="M8.5 1 L6.5 1 Q4.5 1 4.5 3.5 L4.5 7 L0.8 11 L4.5 15 L4.5 18.5 Q4.5 21 6.5 21 L8.5 21 M12.5 1 L14.5 1 Q16.5 1 16.5 3.5 L16.5 7 L20.2 11 L16.5 15 L16.5 18.5 Q16.5 21 14.5 21 L12.5 21" fill="none" stroke="#b4b4b4" stroke-width="2"/></svg>
<div style="left:464px;top:1340.5px;width:281px;height:25.5px;background:#1e1e1e;border-radius:4px;border:1px solid #303030;"></div>
<span class="t" id="t148" style="left:500px;top:1340.0px;font-size:19px;line-height:25px;color:#b4b4b4;letter-spacing:-0.052px;">Toggle Switches / Modes</span>
<div style="left:978px;top:955px;width:2px;height:382.5px;background:#0a0a0a;"></div>
<div style="left:979px;top:955px;width:12px;height:20px;background:#1a1a1a;"></div>
<div style="left:2457px;top:955px;width:11.3px;height:20px;background:#1a1a1a;"></div>
<svg style="left:2459.5px;top:955px;" width="9" height="9" viewBox="0 0 9 9"><path d="M0 0 L9 0 L9 9 Q8 1.5 0 0Z" fill="#050505"/></svg>
<div style="left:990px;top:957.3px;width:1467px;height:16.7px;background:#403b35;border:solid #5c4e3e;border-width:1px 0 1px 0;"></div>
<div style="left:1009.3px;top:956.9px;width:416.6px;height:17px;background:#050505;"></div>
<div style="left:1011.2px;top:958.4px;width:412.6px;height:13.8px;background:#686868;"></div>
<div style="left:998.7px;top:958px;width:10.6px;height:14.7px;background:#2f94f0;border-radius:6px 0 0 6px;"></div>
<div style="left:1425.9px;top:958px;width:10.6px;height:14.7px;background:#2f94f0;border-radius:0 6px 6px 0;"></div>
<div style="left:1049.5px;top:958.4px;width:1.5px;height:13.8px;background:#8a8a8a;"></div>
<div style="left:1051px;top:958.4px;width:2px;height:13.8px;background:#2d8ceb;"></div>
<svg style="left:979px;top:955px;" width="12" height="12" viewBox="0 0 12 12"><path d="M0 12 L0 0 L12 0 Q2 2 0 12Z" fill="#0a0a0a"/></svg>
<div style="left:979px;top:975px;width:1489.3000000000002px;height:32px;background:#262626;"></div>
<div style="left:979px;top:975px;width:13px;height:32px;background:#222;"></div>
<div style="left:2455px;top:975px;width:13.3px;height:32px;background:#1f1f1f;"></div>
<div style="left:979px;top:1007px;width:1489.3000000000002px;height:2.2px;background:#0a0a0a;"></div>
<div style="left:1058.2px;top:999.8px;width:2.2px;height:7.2px;background:#bcbcbc;"></div>
<span class="t" id="t149" style="left:1045.5px;top:976.8px;font-size:17.5px;line-height:23px;color:#b0b0b0;letter-spacing:-0.928px;-webkit-text-stroke:0.1px;">02s</span>
<div style="left:1194.8200000000002px;top:999.8px;width:2.2px;height:7.2px;background:#bcbcbc;"></div>
<span class="t" id="t150" style="left:1182.1200000000001px;top:976.8px;font-size:17.5px;line-height:23px;color:#b0b0b0;letter-spacing:-0.928px;-webkit-text-stroke:0.1px;">04s</span>
<div style="left:1331.44px;top:999.8px;width:2.2px;height:7.2px;background:#bcbcbc;"></div>
<span class="t" id="t151" style="left:1318.74px;top:976.8px;font-size:17.5px;line-height:23px;color:#b0b0b0;letter-spacing:-0.928px;-webkit-text-stroke:0.1px;">06s</span>
<div style="left:1468.06px;top:999.8px;width:2.2px;height:7.2px;background:#bcbcbc;"></div>
<span class="t" id="t152" style="left:1455.36px;top:976.8px;font-size:17.5px;line-height:23px;color:#b0b0b0;letter-spacing:-0.928px;-webkit-text-stroke:0.1px;">08s</span>
<div style="left:1604.68px;top:999.8px;width:2.2px;height:7.2px;background:#bcbcbc;"></div>
<span class="t" id="t153" style="left:1591.98px;top:976.8px;font-size:17.5px;line-height:23px;color:#b0b0b0;letter-spacing:-0.928px;-webkit-text-stroke:0.1px;">10s</span>
<div style="left:1741.3000000000002px;top:999.8px;width:2.2px;height:7.2px;background:#bcbcbc;"></div>
<span class="t" id="t154" style="left:1728.6000000000001px;top:976.8px;font-size:17.5px;line-height:23px;color:#b0b0b0;letter-spacing:-0.928px;-webkit-text-stroke:0.1px;">12s</span>
<div style="left:1877.92px;top:999.8px;width:2.2px;height:7.2px;background:#bcbcbc;"></div>
<span class="t" id="t155" style="left:1865.22px;top:976.8px;font-size:17.5px;line-height:23px;color:#b0b0b0;letter-spacing:-0.928px;-webkit-text-stroke:0.1px;">14s</span>
<div style="left:2014.54px;top:999.8px;width:2.2px;height:7.2px;background:#bcbcbc;"></div>
<span class="t" id="t156" style="left:2001.84px;top:976.8px;font-size:17.5px;line-height:23px;color:#b0b0b0;letter-spacing:-0.928px;-webkit-text-stroke:0.1px;">16s</span>
<div style="left:2151.1600000000003px;top:999.8px;width:2.2px;height:7.2px;background:#bcbcbc;"></div>
<span class="t" id="t157" style="left:2138.46px;top:976.8px;font-size:17.5px;line-height:23px;color:#b0b0b0;letter-spacing:-0.927px;-webkit-text-stroke:0.1px;">18s</span>
<div style="left:2287.78px;top:999.8px;width:2.2px;height:7.2px;background:#bcbcbc;"></div>
<span class="t" id="t158" style="left:2275.08px;top:976.8px;font-size:17.5px;line-height:23px;color:#b0b0b0;letter-spacing:-0.927px;-webkit-text-stroke:0.1px;">20s</span>
<div style="left:2424.4px;top:999.8px;width:2.2px;height:7.2px;background:#bcbcbc;"></div>
<span class="t" id="t159" style="left:2411.7px;top:976.8px;font-size:17.5px;line-height:23px;color:#b0b0b0;letter-spacing:-0.927px;-webkit-text-stroke:0.1px;">22s</span>
<div style="left:979px;top:1042.0px;width:1489.3000000000002px;height:29.8px;background:#1b1b1b;"></div>
<div style="left:979px;top:1042.3px;width:1489.3000000000002px;height:27.3px;background:#4c4842;border:solid #61584b;border-width:1px 0 1.2px 0;"></div>
<div style="left:979px;top:1071.45px;width:1489.3000000000002px;height:29.8px;background:#1b1b1b;"></div>
<div style="left:979px;top:1071.75px;width:1147.5px;height:27.3px;background:#4c4842;border:solid #61584b;border-width:1px 0 1.2px 0;"></div>
<div style="left:2126.5px;top:1071.75px;width:341.8000000000002px;height:27.3px;background:#746b5b;border:1px solid #85796a;border-width:0 0 1px 1.5px;"></div>
<div style="left:979px;top:1100.9px;width:1489.3000000000002px;height:29.8px;background:#1b1b1b;"></div>
<div style="left:979px;top:1101.2px;width:588.5px;height:27.3px;background:#4c4842;border:solid #61584b;border-width:1px 0 1.2px 0;"></div>
<div style="left:1567.5px;top:1101.2px;width:559.0px;height:27.3px;background:#746b5b;border:1px solid #85796a;border-width:0 0 1px 1.5px;"></div>
<div style="left:2126.5px;top:1101.2px;width:341.8000000000002px;height:27.3px;background:#4c4842;border:solid #61584b;border-width:1px 0 1.2px 0;"></div>
<div style="left:979px;top:1130.35px;width:1489.3000000000002px;height:29.8px;background:#1b1b1b;"></div>
<div style="left:979px;top:1130.6499999999999px;width:369px;height:27.3px;background:#3c3c3c;"></div>
<div style="left:1348px;top:1130.6499999999999px;width:219.5px;height:27.3px;background:#7b3b3d;border:1px solid #6a3033;border-width:0 1px 1.5px 1px;"></div>
<div style="left:1567.5px;top:1130.6499999999999px;width:900.8000000000002px;height:27.3px;background:#3c3c3c;"></div>
<div style="left:979px;top:1159.8px;width:1489.3000000000002px;height:29.8px;background:#1b1b1b;"></div>
<div style="left:979px;top:1160.1px;width:393.5px;height:27.3px;background:#7b3b3d;border:1px solid #6a3033;border-width:0 1px 1.5px 1px;"></div>
<div style="left:1372.5px;top:1160.1px;width:1095.8000000000002px;height:27.3px;background:#3c3c3c;"></div>
<div style="left:979px;top:1189.25px;width:1489.3000000000002px;height:29.8px;background:#1b1b1b;"></div>
<div style="left:979px;top:1189.55px;width:1489.3000000000002px;height:27.3px;background:#7b3b3d;border:1px solid #6a3033;border-width:0 1px 1.5px 1px;"></div>
<div style="left:979px;top:1218.7px;width:1489.3000000000002px;height:29.8px;background:#1b1b1b;"></div>
<div style="left:979px;top:1219.0px;width:1489.3000000000002px;height:27.3px;background:#937f85;border-bottom:1.5px solid #7f6c72;"></div>
<div style="left:979px;top:1248.15px;width:1489.3000000000002px;height:29.8px;background:#1b1b1b;"></div>
<div style="left:979px;top:1248.45px;width:1489.3000000000002px;height:27.3px;background:#3c3c3c;"></div>
<div style="left:979px;top:1277.6px;width:1489.3000000000002px;height:29.8px;background:#1b1b1b;"></div>
<div style="left:979px;top:1277.8999999999999px;width:1489.3000000000002px;height:27.3px;background:#78847b;border-bottom:1.5px solid #687369;"></div>
<div style="left:979px;top:1307.05px;width:1489.3000000000002px;height:29.8px;background:#1b1b1b;"></div>
<div style="left:979px;top:1307.35px;width:1489.3000000000002px;height:27.3px;background:#7b3b3d;border:1px solid #6a3033;border-width:0 1px 1.5px 1px;"></div>
<div style="left:979px;top:1009.2px;width:1489.3000000000002px;height:25.6px;background:#606060;"></div>
<div style="left:979px;top:1034.8px;width:1489.3000000000002px;height:1.7px;background:#0a0a0a;"></div>
<div style="left:979px;top:1036.5px;width:1489.3000000000002px;height:5.2px;background:#1fc51f;"></div>
<div style="left:979px;top:1041.7px;width:1489.3000000000002px;height:2.1px;background:#0a0a0a;"></div>
<div style="left:979px;top:1337.3px;width:1489.3000000000002px;height:29px;background:#1e1e1e;"></div>
<div style="left:978px;top:1337.3px;width:187px;height:29px;background:#262626;"></div>
<div style="left:978px;top:1337px;width:187px;height:1.6px;background:#0c0c0c;"></div>
<div style="left:1184px;top:1340px;width:366.5px;height:25px;background:#2f2f2f;border-radius:12.5px;"></div>
<svg style="left:988.5px;top:1348px;" width="17" height="8" viewBox="0 0 17 8"><path d="M0 7.5 L7 0.8 L10 3.5 L11.5 2.2 L17 7.5Z" fill="#b4b4b4"/></svg>
<div style="left:1033.5px;top:1350.3px;width:74px;height:3px;background:#484848;border-radius:1.5px;"></div>
<div style="left:1078.8px;top:1344.3px;width:16.4px;height:16.4px;background:#4a4a4a;border:2.6px solid #9c9c9c;border-radius:50%;"></div>
<svg style="left:1128px;top:1346px;" width="30" height="13" viewBox="0 0 30 13"><path d="M0 12.5 L5.5 5 L8 8 L4.5 12.5Z M7 12.5 L18 0.5 L29.5 12.5Z" fill="#b4b4b4"/></svg>
<div style="left:1128.8px;top:1004px;width:2.1px;height:333px;background:#2d8ceb;"></div>
<svg style="left:1120px;top:983px;" width="19.5" height="23" viewBox="0 0 19.5 23"><path d="M0.3 0.3 L19.2 0.3 L19.2 10.5 L10.8 22.6 L8.7 22.6 L0.3 10.5Z" fill="#2d8ceb"/><path d="M8 11.2 L11.5 11.2 M9.75 11.2 L9.75 22" stroke="#1b1b1b" stroke-width="1.2"/></svg>
<div style="left:2468.3px;top:953px;width:30.2px;height:413px;background:#262626;"></div>
<div style="left:2468.3px;top:1043.8px;width:29px;height:293px;background:#1d1d1d;"></div>
<div style="left:2468.3px;top:1041.8px;width:27.5px;height:2px;background:#0a0a0a;"></div>
<svg style="left:2474.5px;top:1012px;" width="19" height="25" viewBox="0 0 19 25"><path d="M0.3 0.3 L18.7 0.3 L18.7 16 L9.5 24.5 L0.3 16Z" fill="#b4b4b4"/></svg>
<svg style="left:2468.5px;top:1047.5px;" width="26" height="23" viewBox="0 0 26 23"><path d="M13.8 1.2 L1.2 14.3 L13.8 14.3Z" fill="none" stroke="#b4b4b4" stroke-width="1.5"/><rect x="14.2" y="4.5" width="10.4" height="11.5" fill="#b4b4b4"/><circle cx="11.4" cy="16" r="4.7" fill="#1d1d1d" stroke="#b4b4b4" stroke-width="1.8"/></svg>
<div style="left:2469.8px;top:1279.7px;width:24.8px;height:55.2px;background:#323232;border-radius:12.4px;"></div>
<div style="left:2468.3px;top:1336.8px;width:30.2px;height:29.5px;background:#262626;"></div>
<div style="left:9px;top:4.0px;width:5.5px;height:1.6px;background:#4a4a4a;"></div>
<div style="left:9px;top:8.4px;width:5.5px;height:1.6px;background:#4a4a4a;"></div>
<div style="left:9px;top:12.8px;width:5.5px;height:1.6px;background:#4a4a4a;"></div>
<div style="left:9px;top:17.200000000000003px;width:5.5px;height:1.6px;background:#4a4a4a;"></div>
<div style="left:9px;top:21.6px;width:5.5px;height:1.6px;background:#4a4a4a;"></div>
<div style="left:9px;top:26.0px;width:5.5px;height:1.6px;background:#4a4a4a;"></div>
<div style="left:9px;top:30.400000000000002px;width:5.5px;height:1.6px;background:#4a4a4a;"></div>
<div style="left:9px;top:34.800000000000004px;width:5.5px;height:1.6px;background:#4a4a4a;"></div>
<div style="left:22.5px;top:2px;width:39px;height:37px;background:#171717;border-radius:5px;border:1px solid #2c2c2c;"></div>
<svg style="left:32px;top:5px;" width="24" height="32" viewBox="0 0 24 32"><path d="M1.5 0.8 L22.5 20.5 L12.2 20.8 L1.5 30.5Z" fill="#2d8ceb"/></svg>
<div style="left:65.5px;top:2px;width:40px;height:37px;background:#262626;border-radius:5px;border:1px solid #2e2e2e;"></div>
<svg style="left:70px;top:4px;" width="31" height="32" viewBox="0 0 31 32"><path d="M11.5 17 L10 6.5 Q9.8 4 11.7 3.8 Q13.4 3.7 13.8 6 L15 13.5 L15 3.8 Q15 1.2 17 1.2 Q19 1.2 19 3.8 L19.2 13.5 L20.8 5 Q21.2 2.8 23 3.1 Q24.8 3.5 24.5 5.8 L23.3 15 L26 9.8 Q27 7.8 28.7 8.6 Q30.2 9.5 29.3 11.6 L25.5 21 Q24 26 21.5 28 Q19 30.5 15.5 30 Q12 29.8 9.5 26.5 L2.5 18 Q1 16 2.6 14.9 Q4.2 14 6 15.8 L11.5 21Z" fill="#dcdcdc"/></svg>
<svg style="left:114px;top:5px;" width="30" height="30" viewBox="0 0 30 30"><circle cx="11.5" cy="11.5" r="9.6" fill="none" stroke="#b6b6b6" stroke-width="1.9"/><path d="M18.6 18.6 L27.5 27.5" stroke="#b6b6b6" stroke-width="3.4" stroke-linecap="round"/></svg>
<div style="left:155.3px;top:4px;width:1.6px;height:34px;background:#2d2d2d;"></div>
<svg style="left:169px;top:4px;" width="30" height="32" viewBox="0 0 30 32"><path d="M6.5 9.5 Q12 1.5 20.5 4.5 Q28.5 8 27.5 18" fill="none" stroke="#b6b6b6" stroke-width="2.2"/><path d="M1.2 4.5 L3.2 13.5 L12 10.5Z" fill="#b6b6b6"/><path d="M3.5 20.5 Q6 28.5 14.5 28.8 Q23 28.6 26.2 21.5" fill="none" stroke="#b6b6b6" stroke-width="2.3" stroke-dasharray="0.1 3.9" stroke-linecap="round"/></svg>
<svg style="left:211px;top:7px;" width="35" height="31" viewBox="0 0 35 31"><rect x="0.9" y="1.7" width="19.3" height="19.1" rx="4.6" fill="#b6b6b6"/><path d="M19.5 6.9 L24.8 6.9 L31.3 2.3 L33 2.3 L33 16.2 L31.3 16.2 L24.8 14.5 L19.5 14.5Z" fill="#b6b6b6"/><path d="M34.5 24 L34.5 30.5 L28 30.5Z" fill="#8a8a8a"/></svg>
<svg style="left:257px;top:7px;" width="28" height="25" viewBox="0 0 30 27"><path d="M1 1 L29 1 L29 26 L1 26Z" fill="none" stroke="#b6b6b6" stroke-width="2" stroke-dasharray="5.2 3.2"/><path d="M11 8.5 L15 3.5 L19 8.5Z M11 18.5 L15 23.5 L19 18.5Z M9.5 9.5 L4 13.5 L9.5 17.5Z M20.5 9.5 L26 13.5 L20.5 17.5Z" fill="#b6b6b6"/><path d="M4.2 9.5 L4.2 17.5 M25.8 9.5 L25.8 17.5" stroke="#b6b6b6" stroke-width="1.5"/></svg>
<div style="left:297.8px;top:4px;width:1.6px;height:34px;background:#2d2d2d;"></div>
<div style="left:312.5px;top:7px;width:29px;height:25px;background:#454545;border:2px solid #b8b8b8;"></div>
<svg style="left:338px;top:32px;" width="7" height="6" viewBox="0 0 7 6"><path d="M6.5 0 L6.5 5.5 L0.5 5.5Z" fill="#8a8a8a"/></svg>
<svg style="left:355px;top:5px;" width="30" height="30" viewBox="0 0 30 30"><path d="M18 2.5 L27.5 11.5 L24.3 15 L14.8 6Z" fill="#b6b6b6"/><path d="M13.6 7.5 L22.8 16.2 Q21.5 24 8 27.8 L3.2 28.8 L2 27.5 L3.5 22.5 Q6.5 11 13.6 7.5Z" fill="#b6b6b6"/><path d="M3 27.8 L11 19.5" stroke="#262626" stroke-width="1.4"/><circle cx="12" cy="18.4" r="1.9" fill="#262626"/></svg>
<svg style="left:381.5px;top:32px;" width="7" height="6" viewBox="0 0 7 6"><path d="M6.5 0 L6.5 5.5 L0.5 5.5Z" fill="#8a8a8a"/></svg>
<svg style="left:401px;top:7px;" width="26" height="26" viewBox="0 0 26 26"><path d="M0.5 0.5 L25.5 0.5 L25.5 7 L23 7 L23 3.3 L14.8 3.3 L14.8 21.7 L18.5 21.7 L18.5 24.6 L7.5 24.6 L7.5 21.7 L11.2 21.7 L11.2 3.3 L3 3.3 L3 7 L0.5 7Z" fill="#b6b6b6"/></svg>
<svg style="left:425px;top:32px;" width="7" height="6" viewBox="0 0 7 6"><path d="M6.5 0 L6.5 5.5 L0.5 5.5Z" fill="#8a8a8a"/></svg>
<div style="left:440.3px;top:4px;width:1.6px;height:34px;background:#2d2d2d;"></div>
<svg style="left:454px;top:4px;" width="31" height="31" viewBox="0 0 31 31"><path d="M28.5 1 Q30.5 2.5 29 5.5 L17.5 22 L12.5 18 L25.5 2.5 Q27 0.2 28.5 1Z" fill="#b6b6b6"/><path d="M11.5 19.3 L16.3 23.3 Q16.5 28.5 10 29.3 Q4 30 0.8 28.5 Q4.5 27 5.5 23.5 Q7 19 11.5 19.3Z" fill="#b6b6b6"/></svg>
<svg style="left:498px;top:5px;" width="29" height="28" viewBox="0 0 29 28"><circle cx="14.5" cy="5.3" r="4.8" fill="#b6b6b6"/><path d="M12.6 8.5 L16.4 8.5 L16.8 14 Q17.3 18 22.5 18.5 L26 18.6 Q28.5 18.8 28.5 21 L28.5 23.2 L0.5 23.2 L0.5 21 Q0.5 18.8 3 18.6 L6.5 18.5 Q11.7 18 12.2 14Z" fill="#b6b6b6"/><rect x="1.8" y="25.2" width="25.4" height="1.8" fill="#b6b6b6"/></svg>
<svg style="left:541px;top:3px;" width="32" height="35" viewBox="0 0 32 35"><path d="M17 1.7 L30 13.6 L17.6 26.1 L5.1 14.2Z" fill="#b6b6b6"/><path d="M5.1 15 L1.3 21.1 L10.2 30.4 L17.2 26.4" fill="none" stroke="#b6b6b6" stroke-width="1.7" stroke-linejoin="round"/></svg>
<div style="left:582.8px;top:4px;width:1.6px;height:34px;background:#2d2d2d;"></div>
<svg style="left:594px;top:5px;" width="36" height="31" viewBox="0 0 36 31"><circle cx="10" cy="3.6" r="2.6" fill="#b6b6b6"/><path d="M7.5 8 L12.3 8 L12.8 14.5 L16.5 18.5 L14.8 20 L10.3 15.8 L9 21 L5.3 26.6 L3.2 25.3 L6.2 19.8 L6.6 12.5 L3.2 16.2 L1.3 14.6 L5.6 9.2Z" fill="#b6b6b6"/><path d="M10.6 9.5 L16.8 13.5" stroke="#b6b6b6" stroke-width="1.6"/><path d="M33.5 1 Q35 2 34 4.5 L26.8 16.2 L23 13.6 L31.2 2.3 Q32.3 0.5 33.5 1Z" fill="#b6b6b6"/><path d="M22 14.8 L25.8 17.6 Q26 22.5 20.5 23 Q16.5 23.5 13.8 22.3 Q17 21 17.8 18.3 Q19 14.7 22 14.8Z" fill="#b6b6b6"/><circle cx="12.8" cy="25.8" r="1.2" fill="#b6b6b6"/></svg>
<svg style="left:623px;top:31px;" width="7" height="6" viewBox="0 0 7 6"><path d="M6.5 0 L6.5 5.5 L0.5 5.5Z" fill="#8a8a8a"/></svg>
<div style="left:638.8px;top:4px;width:1.6px;height:34px;background:#2d2d2d;"></div>
<svg style="left:650px;top:5px;" width="28" height="28" viewBox="0 0 28 28"><path d="M16.2 0.7 L26.3 10.1 L23 11.6 L22.1 15.8 L17.6 22.2 L5.1 10.6 L11.5 6.4 L13.6 3.3Z" fill="#b6b6b6"/><path d="M10.6 15.8 L12.4 17.6 L3 25.8 L1.2 26.2 L1.8 24.6Z" fill="#b6b6b6"/></svg>
<svg style="left:678.5px;top:31px;" width="7" height="6" viewBox="0 0 7 6"><path d="M6.5 0 L6.5 5.5 L0.5 5.5Z" fill="#8a8a8a"/></svg>
<div style="left:730.3px;top:4px;width:1.6px;height:34px;background:#2d2d2d;"></div>
<div style="left:769px;top:4.5px;width:35px;height:34.5px;background:#171717;border-radius:5px;border:1px solid #2c2c2c;"></div>
<svg style="left:771px;top:9.3px;" width="27" height="24.5" viewBox="0 0 27 24.5"><path d="M13.5 14.5 L13.5 4 M13.5 14.5 L3.5 21.5 M13.5 14.5 L23.5 21.5" stroke="#2d8ceb" stroke-width="1.9" fill="none"/><path d="M9.2 6.8 L13.5 0.3 L17.8 6.8Z M0.5 16.5 L0.3 24 L7.8 23Z M26.5 16.5 L26.7 24 L19.2 23Z" fill="#2d8ceb"/></svg>
<svg style="left:810.5px;top:7px;" width="28" height="26" viewBox="0 0 28 26"><path d="M14 12 L14 4 M11 17 L3.5 22.5 M17 17 L24.5 22.5" stroke="#b6b6b6" stroke-width="1.8" fill="none"/><path d="M9.5 6.5 L14 0.5 L18.5 6.5Z M0.5 17.8 L0.5 25 L7.8 24.3Z M27.5 17.8 L27.5 25 L20.2 24.3Z" fill="#b6b6b6"/><circle cx="14" cy="15" r="3.9" fill="#5a5a5a" stroke="#b6b6b6" stroke-width="1.7"/></svg>
<svg style="left:852px;top:6px;" width="25" height="26" viewBox="0 0 25 26"><path d="M5 12.5 L22 5 L22 17.5 L5 24.5Z" fill="none" stroke="#b6b6b6" stroke-width="1.8"/><path d="M2.5 2.5 L21.5 22.5" stroke="#b6b6b6" stroke-width="1.6"/><path d="M0.5 0.5 L7.5 1.5 L1.5 7.5Z" fill="#b6b6b6"/></svg>
<div style="left:898.3px;top:4px;width:1.6px;height:34px;background:#2d2d2d;"></div>
<div style="left:912px;top:10.7px;width:24px;height:24.6px;background:#262626;border:2.4px solid #a0a0a0;border-radius:4px;"></div>
<span class="t" id="t160" style="left:942px;top:10.0px;font-size:20px;line-height:26px;color:#b6b6b6;letter-spacing:-0.871px;">Snapping</span>
<svg style="left:1040px;top:10px;" width="24" height="24" viewBox="0 0 24 24"><path d="M1.5 22.5 L10.5 14.5 L18.5 22.5" fill="none" stroke="#b6b6b6" stroke-width="1.7"/><path d="M11 11.5 L16 6.5" stroke="#b6b6b6" stroke-width="1.7" stroke-dasharray="1.8 1.8"/><path d="M15.5 1 L23 1 L23 8.5Z" fill="#b6b6b6"/></svg>
<svg style="left:1083px;top:10.5px;" width="23" height="22" viewBox="0 0 23 22"><g fill="none" stroke="#2d8ceb" stroke-width="1.8"><path d="M1 6 L1 1 L6.5 1 M16.5 1 L22 1 L22 6 M22 16 L22 21 L16.5 21 M6.5 21 L1 21 L1 16"/><path d="M7 9.5 L7 7 L9.5 7 M13.5 7 L16 7 L16 9.5 M16 12.5 L16 15 L13.5 15 M9.5 15 L7 15 L7 12.5" stroke-width="1.5"/></g></svg>
<div style="left:1401px;top:0px;width:1.5px;height:42px;background:#161616;"></div>
<span class="t" id="t161" style="left:1441.5px;top:10.5px;font-size:19px;line-height:25px;color:#2f9bf5;letter-spacing:0.123px;">Default</span>
<div style="left:1524.5px;top:16.5px;width:14.5px;height:2px;background:#2f9bf5;"></div>
<div style="left:1524.5px;top:22.0px;width:14.5px;height:2px;background:#2f9bf5;"></div>
<div style="left:1524.5px;top:27.5px;width:14.5px;height:2px;background:#2f9bf5;"></div>
<span class="t" id="t162" style="left:1578px;top:10.5px;font-size:19px;line-height:25px;color:#b6b6b6;letter-spacing:-0.217px;">Standard</span>
<span class="t" id="t163" style="left:1729px;top:10.5px;font-size:19px;line-height:25px;color:#b6b6b6;letter-spacing:-0.348px;">Small Screen</span>
<span class="t" id="t164" style="left:1913.5px;top:10.5px;font-size:19px;line-height:25px;color:#b6b6b6;letter-spacing:-0.103px;">Libraries</span>
<svg style="left:2055px;top:12px;" width="20" height="15" viewBox="0 0 20 15"><path d="M2 1.5 L8.2 7.3 L2 13.1 M10.8 1.5 L17 7.3 L10.8 13.1" fill="none" stroke="#c0c0c0" stroke-width="2.7" stroke-linecap="round" stroke-linejoin="round"/></svg>
<div style="left:2089.3px;top:0px;width:3.4px;height:42px;background:#2f2f2f;"></div>
<svg style="left:2101px;top:12px;" width="34" height="21" viewBox="0 0 34 21"><rect x="0.5" y="0.5" width="33" height="20" rx="2.5" fill="#b6b6b6"/><circle cx="9.5" cy="10.5" r="4.3" fill="none" stroke="#262626" stroke-width="2.2"/><g stroke="#262626" stroke-width="2"><path d="M9.5 3 L9.5 18 M2 10.5 L17 10.5 M4.2 5.2 L14.8 15.8 M14.8 5.2 L4.2 15.8"/></g><circle cx="9.5" cy="10.5" r="2" fill="#b6b6b6"/><path d="M20 7 L30 7 M20 14 L30 14" stroke="#262626" stroke-width="1.8"/><path d="M23 3.5 L18.5 7 L23 10.5Z M27 10.5 L31.5 14 L27 17.5Z" fill="#262626"/></svg>
<div style="left:2156.5px;top:6.3px;width:334.5px;height:31px;background:#161616;border-radius:6px;border:1.2px solid #303030;"></div>
<svg style="left:2164px;top:12px;" width="22" height="22" viewBox="0 0 22 22"><circle cx="13" cy="8.5" r="6.6" fill="none" stroke="#c4c4c4" stroke-width="1.9"/><path d="M8.5 13.5 L2 20" stroke="#c4c4c4" stroke-width="2.4" stroke-linecap="round"/></svg>
<span class="t" id="t165" style="left:2205px;top:10.5px;font-size:19px;line-height:25px;color:#cfcfcf;letter-spacing:-0.339px;">Search Help</span>

</div></body></html>
